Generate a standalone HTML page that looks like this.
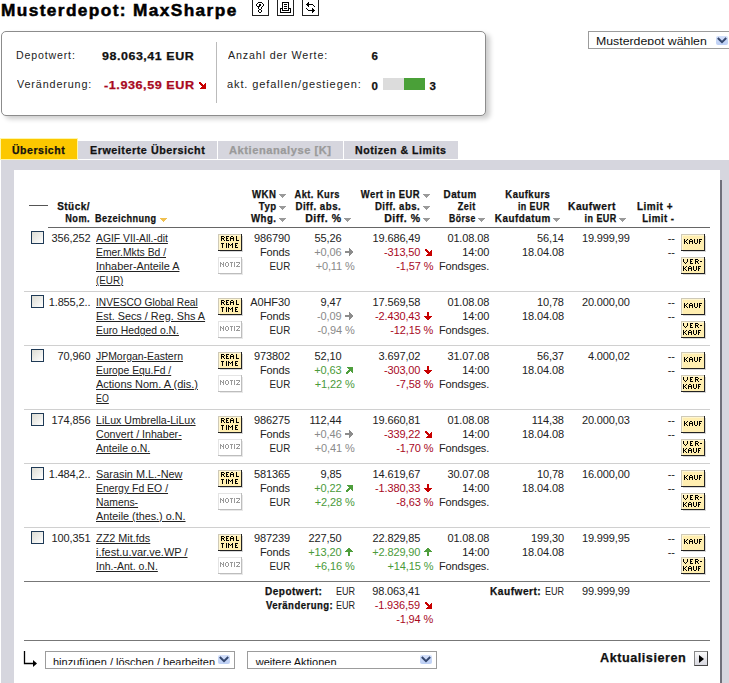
<!DOCTYPE html>
<html><head><meta charset="utf-8"><style>
html,body{margin:0;padding:0;background:#fff;}
body{width:729px;height:683px;position:relative;overflow:hidden;font-family:"Liberation Sans",sans-serif;}
.t{position:absolute;white-space:nowrap;}
.nm{text-decoration:underline;}
.b{-webkit-text-stroke:0.25px currentColor;}
</style></head><body>
<div class="t b" style="top:3px;font-size:16px;line-height:16px;font-weight:bold;letter-spacing:1.3px;transform:scaleX(1.0768);transform-origin:left center;left:1.482px;-webkit-text-stroke:0.5px #000;">Musterdepot: MaxSharpe</div>
<div style="position:absolute;left:252px;top:-1px;width:15px;height:15px;border:1px solid #222;background:#fff"></div>
<div style="position:absolute;left:277px;top:-1px;width:15px;height:15px;border:1px solid #222;background:#fff"></div>
<div style="position:absolute;left:302px;top:-1px;width:15px;height:15px;border:1px solid #222;background:#fff"></div>
<svg style="position:absolute;left:256px;top:2px" width="8" height="11" shape-rendering="crispEdges"><path d="M2 0h1v1h-1zM3 0h1v1h-1zM4 0h1v1h-1zM5 0h1v1h-1zM1 1h1v1h-1zM6 1h1v1h-1zM0 2h1v1h-1zM3 2h1v1h-1zM4 2h1v1h-1zM7 2h1v1h-1zM0 3h1v1h-1zM3 3h1v1h-1zM4 3h1v1h-1zM7 3h1v1h-1zM1 4h1v1h-1zM2 4h1v1h-1zM3 4h1v1h-1zM6 4h1v1h-1zM2 5h1v1h-1zM5 5h1v1h-1zM2 6h1v1h-1zM5 6h1v1h-1zM3 7h1v1h-1zM4 7h1v1h-1zM2 8h1v1h-1zM5 8h1v1h-1zM2 9h1v1h-1zM5 9h1v1h-1zM3 10h1v1h-1zM4 10h1v1h-1z" fill="#000"/></svg>
<svg style="position:absolute;left:280px;top:2px" width="11" height="11" shape-rendering="crispEdges"><path d="M2 0h1v1h-1zM3 0h1v1h-1zM4 0h1v1h-1zM5 0h1v1h-1zM6 0h1v1h-1zM7 0h1v1h-1zM8 0h1v1h-1zM2 1h1v1h-1zM8 1h1v1h-1zM2 2h1v1h-1zM4 2h1v1h-1zM5 2h1v1h-1zM6 2h1v1h-1zM8 2h1v1h-1zM2 3h1v1h-1zM8 3h1v1h-1zM2 4h1v1h-1zM4 4h1v1h-1zM5 4h1v1h-1zM6 4h1v1h-1zM8 4h1v1h-1zM2 5h1v1h-1zM8 5h1v1h-1zM0 6h1v1h-1zM1 6h1v1h-1zM2 6h1v1h-1zM4 6h1v1h-1zM5 6h1v1h-1zM6 6h1v1h-1zM8 6h1v1h-1zM9 6h1v1h-1zM10 6h1v1h-1zM0 7h1v1h-1zM2 7h1v1h-1zM8 7h1v1h-1zM10 7h1v1h-1zM0 8h1v1h-1zM2 8h1v1h-1zM3 8h1v1h-1zM4 8h1v1h-1zM5 8h1v1h-1zM6 8h1v1h-1zM7 8h1v1h-1zM8 8h1v1h-1zM10 8h1v1h-1zM0 9h1v1h-1zM10 9h1v1h-1zM0 10h1v1h-1zM1 10h1v1h-1zM2 10h1v1h-1zM3 10h1v1h-1zM4 10h1v1h-1zM5 10h1v1h-1zM6 10h1v1h-1zM7 10h1v1h-1zM8 10h1v1h-1zM9 10h1v1h-1zM10 10h1v1h-1z" fill="#000"/></svg>
<svg style="position:absolute;left:305px;top:2px" width="11" height="11" shape-rendering="crispEdges"><path d="M3 0h1v1h-1zM2 1h1v1h-1zM3 1h1v1h-1zM1 2h1v1h-1zM2 2h1v1h-1zM3 2h1v1h-1zM4 2h1v1h-1zM5 2h1v1h-1zM6 2h1v1h-1zM7 2h1v1h-1zM2 3h1v1h-1zM3 3h1v1h-1zM8 3h1v1h-1zM3 4h1v1h-1zM9 4h1v1h-1zM1 6h1v1h-1zM7 6h1v1h-1zM2 7h1v1h-1zM7 7h1v1h-1zM8 7h1v1h-1zM3 8h1v1h-1zM4 8h1v1h-1zM5 8h1v1h-1zM6 8h1v1h-1zM7 8h1v1h-1zM8 8h1v1h-1zM9 8h1v1h-1zM7 9h1v1h-1zM8 9h1v1h-1zM7 10h1v1h-1z" fill="#000"/></svg>
<div style="position:absolute;left:1px;top:31px;width:485px;height:85px;box-sizing:border-box;border:1px solid #8c8c8c;border-radius:5px;box-shadow:4px 3px 5px rgba(0,0,0,0.2);background:#fff"></div>
<div style="position:absolute;left:216px;top:42px;width:1px;height:61px;background:#bbb"></div>
<div class="t" style="top:51px;font-size:10px;line-height:10px;color:#222;letter-spacing:0.8px;transform:scaleX(1.0592);transform-origin:left center;left:16.273px;">Depotwert:</div>
<div class="t b" style="top:51px;font-size:11.5px;line-height:11.5px;font-weight:bold;color:#111;letter-spacing:0.5px;transform:scaleX(1.0833);transform-origin:left center;left:102.000px;">98.063,41 EUR</div>
<div class="t" style="top:80px;font-size:10px;line-height:10px;color:#222;letter-spacing:0.8px;transform:scaleX(1.0790);transform-origin:left center;left:17.158px;">Veränderung:</div>
<div class="t b" style="top:80px;font-size:11.5px;line-height:11.5px;font-weight:bold;color:#a8081e;letter-spacing:0.5px;transform:scaleX(1.0975);transform-origin:left center;left:103.723px;">-1.936,59 EUR</div>
<div class="t" style="top:51px;font-size:10px;line-height:10px;color:#222;letter-spacing:0.8px;transform:scaleX(1.0710);transform-origin:left center;left:227.598px;">Anzahl der Werte:</div>
<div class="t b" style="top:51px;font-size:11.5px;line-height:11.5px;font-weight:bold;color:#111;left:371.500px;">6</div>
<div class="t" style="top:80px;font-size:10px;line-height:10px;color:#222;letter-spacing:0.8px;transform:scaleX(1.1030);transform-origin:left center;left:227.361px;">akt. gefallen/gestiegen:</div>
<div class="t b" style="top:81px;font-size:11.5px;line-height:11.5px;font-weight:bold;color:#111;left:371.500px;">0</div>
<div style="position:absolute;left:383px;top:78px;width:20.6px;height:12px;background:#dcdcdc"></div>
<div style="position:absolute;left:403.6px;top:78px;width:21.4px;height:12px;background:#4aa038"></div>
<div class="t b" style="top:81px;font-size:11.5px;line-height:11.5px;font-weight:bold;color:#111;left:429.500px;">3</div>
<div style="position:absolute;left:588px;top:31px;width:160px;height:18px;box-sizing:border-box;border:1px solid #9c9c9c;background:#fff;overflow:hidden"></div>
<div class="t" style="top:37px;font-size:10px;line-height:10px;color:#111;transform:scaleX(1.2304);transform-origin:left center;left:595.763px;clip-path:inset(-3px -3px 2px -3px);">Musterdepot wählen</div>
<div style="position:absolute;left:716px;top:36px;width:12px;height:9px;background:linear-gradient(180deg,#d4e0fa,#bccff5);border-radius:2px"><svg width="12" height="9" viewBox="0 0 12 9" style="position:absolute;left:0;top:0"><path d="M1.8 2 L6 6.2 L10.2 2" stroke="#34476e" stroke-width="2" fill="none"/></svg></div>
<div style="position:absolute;left:0px;top:138px;width:78px;height:22px;background:#fff6a8"></div>
<div style="position:absolute;left:1px;top:139px;width:76px;height:20px;background:#fcc800"></div>
<div style="position:absolute;left:78px;top:141px;width:139px;height:18px;background:#d6d6de"></div>
<div style="position:absolute;left:218px;top:141px;width:125px;height:18px;background:#d6d6de"></div>
<div style="position:absolute;left:344px;top:141px;width:114px;height:18px;background:#d6d6de"></div>
<div class="t b" style="top:146px;font-size:10px;line-height:10px;font-weight:bold;color:#111;letter-spacing:0.5px;transform:scaleX(1.0511);transform-origin:left center;left:12.322px;">Übersicht</div>
<div class="t b" style="top:146px;font-size:10px;line-height:10px;font-weight:bold;color:#111;letter-spacing:0.5px;transform:scaleX(1.0751);transform-origin:left center;left:90.169px;">Erweiterte Übersicht</div>
<div class="t b" style="top:146px;font-size:10px;line-height:10px;font-weight:bold;color:#9a9a9a;letter-spacing:0.5px;transform:scaleX(1.1101);transform-origin:left center;left:229.287px;">Aktienanalyse [K]</div>
<div class="t b" style="top:146px;font-size:10px;line-height:10px;font-weight:bold;color:#111;letter-spacing:0.5px;transform:scaleX(1.0594);transform-origin:left center;left:355.315px;">Notizen &amp; Limits</div>
<div style="position:absolute;left:1px;top:160px;width:728px;height:523px;background:#d6d6de"></div>
<div style="position:absolute;left:14px;top:170px;width:706px;height:513px;background:#fff"></div>
<div style="position:absolute;left:720px;top:180px;width:2px;height:503px;background:#70707a"></div>
<div style="position:absolute;left:29px;top:205px;width:19px;height:1px;background:#555"></div>
<div class="t b" style="top:202px;font-size:10px;line-height:10px;font-weight:bold;color:#111;letter-spacing:0.5px;transform:scaleX(0.9959);transform-origin:right center;right:638.747px;text-align:right;">Stück/</div>
<div class="t b" style="top:214px;font-size:10px;line-height:10px;font-weight:bold;color:#111;letter-spacing:0.5px;transform:scaleX(0.9147);transform-origin:right center;right:638.846px;text-align:right;">Nom.</div>
<div class="t b" style="top:214px;font-size:10px;line-height:10px;font-weight:bold;color:#111;letter-spacing:0.5px;transform:scaleX(0.9097);transform-origin:left center;left:95.368px;">Bezeichnung</div>
<svg style="position:absolute;left:160px;top:218px" width="7" height="4" shape-rendering="crispEdges"><path d="M0 0h7v1h-1v1h-1v1h-1v1h-1v-1h-1v-1h-1v-1h-1z" fill="#f0c050"/></svg>
<div class="t b" style="top:190px;font-size:10px;line-height:10px;font-weight:bold;color:#111;letter-spacing:0.5px;transform:scaleX(0.9633);transform-origin:right center;right:452.738px;text-align:right;">WKN</div>
<div class="t b" style="top:202px;font-size:10px;line-height:10px;font-weight:bold;color:#111;letter-spacing:0.5px;transform:scaleX(0.9573);transform-origin:right center;right:452.690px;text-align:right;">Typ</div>
<div class="t b" style="top:214px;font-size:10px;line-height:10px;font-weight:bold;color:#111;letter-spacing:0.5px;transform:scaleX(0.9661);transform-origin:right center;right:452.708px;text-align:right;">Whg.</div>
<svg style="position:absolute;left:279px;top:194px" width="7" height="4" shape-rendering="crispEdges"><path d="M0 0h7v1h-1v1h-1v1h-1v1h-1v-1h-1v-1h-1v-1h-1z" fill="#9a9a9a"/></svg>
<svg style="position:absolute;left:279px;top:206px" width="7" height="4" shape-rendering="crispEdges"><path d="M0 0h7v1h-1v1h-1v1h-1v1h-1v-1h-1v-1h-1v-1h-1z" fill="#9a9a9a"/></svg>
<svg style="position:absolute;left:279px;top:218px" width="7" height="4" shape-rendering="crispEdges"><path d="M0 0h7v1h-1v1h-1v1h-1v1h-1v-1h-1v-1h-1v-1h-1z" fill="#9a9a9a"/></svg>
<div class="t b" style="top:190px;font-size:10px;line-height:10px;font-weight:bold;color:#111;letter-spacing:0.5px;transform:scaleX(0.9284);transform-origin:right center;right:388.746px;text-align:right;">Akt. Kurs</div>
<div class="t b" style="top:202px;font-size:10px;line-height:10px;font-weight:bold;color:#111;letter-spacing:0.5px;transform:scaleX(0.9706);transform-origin:right center;right:387.766px;text-align:right;">Diff. abs.</div>
<div class="t b" style="top:214px;font-size:10px;line-height:10px;font-weight:bold;color:#111;letter-spacing:0.5px;transform:scaleX(1.0525);transform-origin:right center;right:387.798px;text-align:right;">Diff. %</div>
<svg style="position:absolute;left:344px;top:218px" width="7" height="4" shape-rendering="crispEdges"><path d="M0 0h7v1h-1v1h-1v1h-1v1h-1v-1h-1v-1h-1v-1h-1z" fill="#9a9a9a"/></svg>
<div class="t b" style="top:190px;font-size:10px;line-height:10px;font-weight:bold;color:#111;letter-spacing:0.5px;transform:scaleX(0.9405);transform-origin:right center;right:309.000px;text-align:right;">Wert in EUR</div>
<div class="t b" style="top:202px;font-size:10px;line-height:10px;font-weight:bold;color:#111;letter-spacing:0.5px;transform:scaleX(0.9589);transform-origin:right center;right:309.059px;text-align:right;">Diff. abs.</div>
<div class="t b" style="top:214px;font-size:10px;line-height:10px;font-weight:bold;color:#111;letter-spacing:0.5px;transform:scaleX(1.0525);transform-origin:right center;right:307.985px;text-align:right;">Diff. %</div>
<svg style="position:absolute;left:423px;top:194px" width="7" height="4" shape-rendering="crispEdges"><path d="M0 0h7v1h-1v1h-1v1h-1v1h-1v-1h-1v-1h-1v-1h-1z" fill="#9a9a9a"/></svg>
<svg style="position:absolute;left:423px;top:206px" width="7" height="4" shape-rendering="crispEdges"><path d="M0 0h7v1h-1v1h-1v1h-1v1h-1v-1h-1v-1h-1v-1h-1z" fill="#9a9a9a"/></svg>
<svg style="position:absolute;left:423px;top:218px" width="7" height="4" shape-rendering="crispEdges"><path d="M0 0h7v1h-1v1h-1v1h-1v1h-1v-1h-1v-1h-1v-1h-1z" fill="#9a9a9a"/></svg>
<div class="t b" style="top:190px;font-size:10px;line-height:10px;font-weight:bold;color:#111;letter-spacing:0.5px;transform:scaleX(0.9833);transform-origin:right center;right:252.556px;text-align:right;">Datum</div>
<div class="t b" style="top:202px;font-size:10px;line-height:10px;font-weight:bold;color:#111;letter-spacing:0.5px;transform:scaleX(0.9073);transform-origin:right center;right:253.524px;text-align:right;">Zeit</div>
<div class="t b" style="top:214px;font-size:10px;line-height:10px;font-weight:bold;color:#111;letter-spacing:0.5px;transform:scaleX(0.8668);transform-origin:right center;right:253.468px;text-align:right;">Börse</div>
<svg style="position:absolute;left:478px;top:218px" width="7" height="4" shape-rendering="crispEdges"><path d="M0 0h7v1h-1v1h-1v1h-1v1h-1v-1h-1v-1h-1v-1h-1z" fill="#9a9a9a"/></svg>
<div class="t b" style="top:190px;font-size:10px;line-height:10px;font-weight:bold;color:#111;letter-spacing:0.5px;transform:scaleX(0.9502);transform-origin:right center;right:179.044px;text-align:right;">Kaufkurs</div>
<div class="t b" style="top:202px;font-size:10px;line-height:10px;font-weight:bold;color:#111;letter-spacing:0.5px;transform:scaleX(0.8916);transform-origin:right center;right:178.967px;text-align:right;">in EUR</div>
<div class="t b" style="top:214px;font-size:10px;line-height:10px;font-weight:bold;color:#111;letter-spacing:0.5px;transform:scaleX(0.9846);transform-origin:right center;right:178.001px;text-align:right;">Kaufdatum</div>
<svg style="position:absolute;left:553px;top:218px" width="7" height="4" shape-rendering="crispEdges"><path d="M0 0h7v1h-1v1h-1v1h-1v1h-1v-1h-1v-1h-1v-1h-1z" fill="#9a9a9a"/></svg>
<div class="t b" style="top:202px;font-size:10px;line-height:10px;font-weight:bold;color:#111;letter-spacing:0.5px;transform:scaleX(1.0201);transform-origin:right center;right:113.081px;text-align:right;">Kaufwert</div>
<div class="t b" style="top:214px;font-size:10px;line-height:10px;font-weight:bold;color:#111;letter-spacing:0.5px;transform:scaleX(0.9017);transform-origin:right center;right:111.944px;text-align:right;">in EUR</div>
<svg style="position:absolute;left:619px;top:218px" width="7" height="4" shape-rendering="crispEdges"><path d="M0 0h7v1h-1v1h-1v1h-1v1h-1v-1h-1v-1h-1v-1h-1z" fill="#9a9a9a"/></svg>
<div class="t b" style="top:202px;font-size:10px;line-height:10px;font-weight:bold;color:#111;letter-spacing:0.5px;transform:scaleX(1.0005);transform-origin:right center;right:56.181px;text-align:right;">Limit +</div>
<div class="t b" style="top:214px;font-size:10px;line-height:10px;font-weight:bold;color:#111;letter-spacing:0.5px;transform:scaleX(0.9640);transform-origin:right center;right:54.713px;text-align:right;">Limit -</div>
<div style="position:absolute;left:48px;top:227px;width:662px;height:1px;background:#666"></div>
<div style="position:absolute;left:31px;top:231px;width:13px;height:13px;box-sizing:border-box;border:1px solid #1f3a56;background:linear-gradient(135deg,#dcdcd4,#ffffff)"></div>
<div class="t" style="top:233px;font-size:11px;line-height:11px;color:#222;letter-spacing:-0.13px;right:638.630px;text-align:right;">356,252</div>
<div class="t" style="top:233px;font-size:11px;line-height:11px;color:#222;transform:scaleX(0.9406);transform-origin:left center;left:95.780px;text-decoration:underline;">AGIF VII-All.-dit</div>
<div class="t" style="top:247px;font-size:11px;line-height:11px;color:#222;transform:scaleX(0.9389);transform-origin:left center;left:95.780px;text-decoration:underline;">Emer.Mkts Bd /</div>
<div class="t" style="top:261px;font-size:11px;line-height:11px;color:#222;transform:scaleX(0.9886);transform-origin:left center;left:95.796px;text-decoration:underline;">Inhaber-Anteile A</div>
<div class="t" style="top:275px;font-size:11px;line-height:11px;color:#222;transform:scaleX(0.8924);transform-origin:left center;left:95.764px;text-decoration:underline;">(EUR)</div>
<svg style="position:absolute;left:218px;top:234px" width="26" height="19" shape-rendering="crispEdges"><rect x="0" y="0" width="24" height="17" fill="#ffeeb0"/><rect x="1" y="1" width="22" height="1" fill="#fff6d0"/><rect x="1" y="1" width="1" height="15" fill="#fff6d0"/><rect x="0" y="0" width="24" height="1" fill="#cfcab8"/><rect x="0" y="0" width="1" height="17" fill="#cfcab8"/><rect x="23" y="0" width="1" height="17" fill="#222"/><rect x="0" y="16" width="24" height="1" fill="#222"/><rect x="24" y="2" width="1" height="16" fill="#d8d8d8"/><rect x="2" y="17" width="23" height="1" fill="#d8d8d8"/><path d="M3 2h1v1h-1zM4 2h1v1h-1zM5 2h1v1h-1zM3 3h1v1h-1zM6 3h1v1h-1zM3 4h1v1h-1zM4 4h1v1h-1zM5 4h1v1h-1zM3 5h1v1h-1zM5 5h1v1h-1zM3 6h1v1h-1zM6 6h1v1h-1zM8 2h1v1h-1zM9 2h1v1h-1zM10 2h1v1h-1zM8 3h1v1h-1zM8 4h1v1h-1zM9 4h1v1h-1zM8 5h1v1h-1zM8 6h1v1h-1zM9 6h1v1h-1zM10 6h1v1h-1zM13 2h1v1h-1zM14 2h1v1h-1zM12 3h1v1h-1zM15 3h1v1h-1zM12 4h1v1h-1zM13 4h1v1h-1zM14 4h1v1h-1zM15 4h1v1h-1zM12 5h1v1h-1zM15 5h1v1h-1zM12 6h1v1h-1zM15 6h1v1h-1zM18 2h1v1h-1zM18 3h1v1h-1zM18 4h1v1h-1zM18 5h1v1h-1zM18 6h1v1h-1zM19 6h1v1h-1zM20 6h1v1h-1zM3 9h1v1h-1zM4 9h1v1h-1zM5 9h1v1h-1zM4 10h1v1h-1zM4 11h1v1h-1zM4 12h1v1h-1zM4 13h1v1h-1zM8 9h1v1h-1zM8 10h1v1h-1zM8 11h1v1h-1zM8 12h1v1h-1zM8 13h1v1h-1zM10 9h1v1h-1zM14 9h1v1h-1zM10 10h1v1h-1zM11 10h1v1h-1zM13 10h1v1h-1zM14 10h1v1h-1zM10 11h1v1h-1zM12 11h1v1h-1zM14 11h1v1h-1zM10 12h1v1h-1zM14 12h1v1h-1zM10 13h1v1h-1zM14 13h1v1h-1zM17 9h1v1h-1zM18 9h1v1h-1zM19 9h1v1h-1zM17 10h1v1h-1zM17 11h1v1h-1zM18 11h1v1h-1zM17 12h1v1h-1zM17 13h1v1h-1zM18 13h1v1h-1zM19 13h1v1h-1z" fill="#000"/></svg>
<svg style="position:absolute;left:218px;top:257px" width="26" height="19" shape-rendering="crispEdges"><rect x="0" y="0" width="24" height="17" fill="#fff"/><rect x="0" y="0" width="24" height="1" fill="#e4e4e4"/><rect x="0" y="0" width="1" height="17" fill="#e4e4e4"/><rect x="23" y="0" width="1" height="17" fill="#bdbdbd"/><rect x="0" y="16" width="24" height="1" fill="#bdbdbd"/><rect x="24" y="2" width="1" height="16" fill="#e8e8e8"/><rect x="2" y="17" width="23" height="1" fill="#e8e8e8"/><path d="M2 5h1v1h-1zM5 5h1v1h-1zM2 6h1v1h-1zM3 6h1v1h-1zM5 6h1v1h-1zM2 7h1v1h-1zM4 7h1v1h-1zM5 7h1v1h-1zM2 8h1v1h-1zM5 8h1v1h-1zM2 9h1v1h-1zM5 9h1v1h-1zM8 5h1v1h-1zM9 5h1v1h-1zM7 6h1v1h-1zM10 6h1v1h-1zM7 7h1v1h-1zM10 7h1v1h-1zM7 8h1v1h-1zM10 8h1v1h-1zM8 9h1v1h-1zM9 9h1v1h-1zM12 5h1v1h-1zM13 5h1v1h-1zM14 5h1v1h-1zM13 6h1v1h-1zM13 7h1v1h-1zM13 8h1v1h-1zM13 9h1v1h-1zM16 5h1v1h-1zM16 6h1v1h-1zM16 7h1v1h-1zM16 8h1v1h-1zM16 9h1v1h-1zM18 5h1v1h-1zM19 5h1v1h-1zM20 5h1v1h-1zM21 5h1v1h-1zM21 6h1v1h-1zM20 7h1v1h-1zM19 8h1v1h-1zM18 9h1v1h-1zM19 9h1v1h-1zM20 9h1v1h-1zM21 9h1v1h-1z" fill="#9a9a9a"/></svg>
<div class="t" style="top:233px;font-size:11px;line-height:11px;color:#222;letter-spacing:-0.13px;right:439.130px;text-align:right;">986790</div>
<div class="t" style="top:247px;font-size:11px;line-height:11px;color:#222;letter-spacing:-0.13px;right:439.130px;text-align:right;">Fonds</div>
<div class="t" style="top:261px;font-size:11px;line-height:11px;color:#222;transform:scaleX(0.8905);transform-origin:right center;right:439.000px;text-align:right;">EUR</div>
<div class="t" style="top:233px;font-size:11px;line-height:11px;color:#222;letter-spacing:-0.13px;right:387.530px;text-align:right;">55,26</div>
<div class="t" style="top:247px;font-size:11px;line-height:11px;color:#8a8a8a;letter-spacing:-0.13px;right:387.530px;text-align:right;">+0,06</div>
<svg style="position:absolute;left:345px;top:248px" width="8" height="8" shape-rendering="crispEdges"><path d="M4 0h1v1h-1zM4 1h1v1h-1zM5 1h1v1h-1zM4 2h1v1h-1zM5 2h1v1h-1zM6 2h1v1h-1zM0 3h1v1h-1zM1 3h1v1h-1zM2 3h1v1h-1zM3 3h1v1h-1zM4 3h1v1h-1zM5 3h1v1h-1zM6 3h1v1h-1zM7 3h1v1h-1zM0 4h1v1h-1zM1 4h1v1h-1zM2 4h1v1h-1zM3 4h1v1h-1zM4 4h1v1h-1zM5 4h1v1h-1zM6 4h1v1h-1zM7 4h1v1h-1zM4 5h1v1h-1zM5 5h1v1h-1zM6 5h1v1h-1zM4 6h1v1h-1zM5 6h1v1h-1zM4 7h1v1h-1z" fill="#8c8c8c"/></svg>
<div class="t" style="top:261px;font-size:11px;line-height:11px;color:#8a8a8a;letter-spacing:-0.13px;right:374.430px;text-align:right;">+0,11 %</div>
<div class="t" style="top:233px;font-size:11px;line-height:11px;color:#222;letter-spacing:-0.13px;right:308.730px;text-align:right;">19.686,49</div>
<div class="t" style="top:247px;font-size:11px;line-height:11px;color:#a8081e;letter-spacing:-0.13px;right:308.730px;text-align:right;">-313,50</div>
<svg style="position:absolute;left:425px;top:249px" width="7" height="7" shape-rendering="crispEdges"><path d="M0 0h1v1h-1zM1 0h1v1h-1zM0 1h1v1h-1zM1 1h1v1h-1zM2 1h1v1h-1zM6 1h1v1h-1zM1 2h1v1h-1zM2 2h1v1h-1zM3 2h1v1h-1zM5 2h1v1h-1zM6 2h1v1h-1zM2 3h1v1h-1zM3 3h1v1h-1zM4 3h1v1h-1zM5 3h1v1h-1zM6 3h1v1h-1zM3 4h1v1h-1zM4 4h1v1h-1zM5 4h1v1h-1zM6 4h1v1h-1zM2 5h1v1h-1zM3 5h1v1h-1zM4 5h1v1h-1zM5 5h1v1h-1zM6 5h1v1h-1zM1 6h1v1h-1zM2 6h1v1h-1zM3 6h1v1h-1zM4 6h1v1h-1zM5 6h1v1h-1zM6 6h1v1h-1z" fill="#c80000"/></svg>
<div class="t" style="top:261px;font-size:11px;line-height:11px;color:#a8081e;letter-spacing:-0.13px;right:295.730px;text-align:right;">-1,57 %</div>
<div class="t" style="top:233px;font-size:11px;line-height:11px;color:#222;letter-spacing:-0.13px;right:239.830px;text-align:right;">01.08.08</div>
<div class="t" style="top:247px;font-size:11px;line-height:11px;color:#222;letter-spacing:-0.13px;right:239.830px;text-align:right;">14:00</div>
<div class="t" style="top:261px;font-size:11px;line-height:11px;color:#222;letter-spacing:-0.13px;right:239.830px;text-align:right;">Fondsges.</div>
<div class="t" style="top:233px;font-size:11px;line-height:11px;color:#222;letter-spacing:-0.13px;right:165.130px;text-align:right;">56,14</div>
<div class="t" style="top:247px;font-size:11px;line-height:11px;color:#222;letter-spacing:-0.13px;right:165.130px;text-align:right;">18.04.08</div>
<div class="t" style="top:233px;font-size:11px;line-height:11px;color:#222;letter-spacing:-0.13px;right:99.330px;text-align:right;">19.999,99</div>
<div class="t" style="top:233px;font-size:11px;line-height:11px;color:#222;letter-spacing:-0.13px;right:54.130px;text-align:right;">--</div>
<div class="t" style="top:247px;font-size:11px;line-height:11px;color:#222;letter-spacing:-0.13px;right:54.130px;text-align:right;">--</div>
<svg style="position:absolute;left:681px;top:234px" width="26" height="19" shape-rendering="crispEdges"><rect x="0" y="0" width="24" height="17" fill="#ffeeb0"/><rect x="1" y="1" width="22" height="1" fill="#fff6d0"/><rect x="1" y="1" width="1" height="15" fill="#fff6d0"/><rect x="0" y="0" width="24" height="1" fill="#cfcab8"/><rect x="0" y="0" width="1" height="17" fill="#cfcab8"/><rect x="23" y="0" width="1" height="17" fill="#222"/><rect x="0" y="16" width="24" height="1" fill="#222"/><rect x="24" y="2" width="1" height="16" fill="#d8d8d8"/><rect x="2" y="17" width="23" height="1" fill="#d8d8d8"/><path d="M3 5h1v1h-1zM6 5h1v1h-1zM3 6h1v1h-1zM5 6h1v1h-1zM3 7h1v1h-1zM4 7h1v1h-1zM3 8h1v1h-1zM5 8h1v1h-1zM3 9h1v1h-1zM6 9h1v1h-1zM9 5h1v1h-1zM10 5h1v1h-1zM8 6h1v1h-1zM11 6h1v1h-1zM8 7h1v1h-1zM9 7h1v1h-1zM10 7h1v1h-1zM11 7h1v1h-1zM8 8h1v1h-1zM11 8h1v1h-1zM8 9h1v1h-1zM11 9h1v1h-1zM13 5h1v1h-1zM16 5h1v1h-1zM13 6h1v1h-1zM16 6h1v1h-1zM13 7h1v1h-1zM16 7h1v1h-1zM13 8h1v1h-1zM16 8h1v1h-1zM14 9h1v1h-1zM15 9h1v1h-1zM18 5h1v1h-1zM19 5h1v1h-1zM20 5h1v1h-1zM18 6h1v1h-1zM18 7h1v1h-1zM19 7h1v1h-1zM18 8h1v1h-1zM18 9h1v1h-1z" fill="#000"/></svg>
<svg style="position:absolute;left:681px;top:257px" width="26" height="19" shape-rendering="crispEdges"><rect x="0" y="0" width="24" height="17" fill="#ffeeb0"/><rect x="1" y="1" width="22" height="1" fill="#fff6d0"/><rect x="1" y="1" width="1" height="15" fill="#fff6d0"/><rect x="0" y="0" width="24" height="1" fill="#cfcab8"/><rect x="0" y="0" width="1" height="17" fill="#cfcab8"/><rect x="23" y="0" width="1" height="17" fill="#222"/><rect x="0" y="16" width="24" height="1" fill="#222"/><rect x="24" y="2" width="1" height="16" fill="#d8d8d8"/><rect x="2" y="17" width="23" height="1" fill="#d8d8d8"/><path d="M2 2h1v1h-1zM6 2h1v1h-1zM2 3h1v1h-1zM6 3h1v1h-1zM2 4h1v1h-1zM6 4h1v1h-1zM3 5h1v1h-1zM5 5h1v1h-1zM4 6h1v1h-1zM9 2h1v1h-1zM10 2h1v1h-1zM11 2h1v1h-1zM9 3h1v1h-1zM9 4h1v1h-1zM10 4h1v1h-1zM9 5h1v1h-1zM9 6h1v1h-1zM10 6h1v1h-1zM11 6h1v1h-1zM14 2h1v1h-1zM15 2h1v1h-1zM16 2h1v1h-1zM14 3h1v1h-1zM17 3h1v1h-1zM14 4h1v1h-1zM15 4h1v1h-1zM16 4h1v1h-1zM14 5h1v1h-1zM16 5h1v1h-1zM14 6h1v1h-1zM17 6h1v1h-1zM19 4h1v1h-1zM20 4h1v1h-1zM2 9h1v1h-1zM5 9h1v1h-1zM2 10h1v1h-1zM4 10h1v1h-1zM2 11h1v1h-1zM3 11h1v1h-1zM2 12h1v1h-1zM4 12h1v1h-1zM2 13h1v1h-1zM5 13h1v1h-1zM8 9h1v1h-1zM9 9h1v1h-1zM7 10h1v1h-1zM10 10h1v1h-1zM7 11h1v1h-1zM8 11h1v1h-1zM9 11h1v1h-1zM10 11h1v1h-1zM7 12h1v1h-1zM10 12h1v1h-1zM7 13h1v1h-1zM10 13h1v1h-1zM12 9h1v1h-1zM15 9h1v1h-1zM12 10h1v1h-1zM15 10h1v1h-1zM12 11h1v1h-1zM15 11h1v1h-1zM12 12h1v1h-1zM15 12h1v1h-1zM13 13h1v1h-1zM14 13h1v1h-1zM17 9h1v1h-1zM18 9h1v1h-1zM19 9h1v1h-1zM17 10h1v1h-1zM17 11h1v1h-1zM18 11h1v1h-1zM17 12h1v1h-1zM17 13h1v1h-1z" fill="#000"/></svg>
<div style="position:absolute;left:24px;top:291px;width:686px;height:1px;background:#d0d0d0"></div>
<div style="position:absolute;left:31px;top:295px;width:13px;height:13px;box-sizing:border-box;border:1px solid #1f3a56;background:linear-gradient(135deg,#dcdcd4,#ffffff)"></div>
<div class="t" style="top:297px;font-size:11px;line-height:11px;color:#222;letter-spacing:-0.13px;right:638.630px;text-align:right;">1.855,2..</div>
<div class="t" style="top:297px;font-size:11px;line-height:11px;color:#222;transform:scaleX(0.9245);transform-origin:left center;left:95.781px;text-decoration:underline;">INVESCO Global Real</div>
<div class="t" style="top:311px;font-size:11px;line-height:11px;color:#222;transform:scaleX(0.9857);transform-origin:left center;left:95.792px;text-decoration:underline;">Est. Secs / Reg. Shs A</div>
<div class="t" style="top:325px;font-size:11px;line-height:11px;color:#222;transform:scaleX(0.9417);transform-origin:left center;left:95.782px;text-decoration:underline;">Euro Hedged o.N.</div>
<svg style="position:absolute;left:218px;top:298px" width="26" height="19" shape-rendering="crispEdges"><rect x="0" y="0" width="24" height="17" fill="#ffeeb0"/><rect x="1" y="1" width="22" height="1" fill="#fff6d0"/><rect x="1" y="1" width="1" height="15" fill="#fff6d0"/><rect x="0" y="0" width="24" height="1" fill="#cfcab8"/><rect x="0" y="0" width="1" height="17" fill="#cfcab8"/><rect x="23" y="0" width="1" height="17" fill="#222"/><rect x="0" y="16" width="24" height="1" fill="#222"/><rect x="24" y="2" width="1" height="16" fill="#d8d8d8"/><rect x="2" y="17" width="23" height="1" fill="#d8d8d8"/><path d="M3 2h1v1h-1zM4 2h1v1h-1zM5 2h1v1h-1zM3 3h1v1h-1zM6 3h1v1h-1zM3 4h1v1h-1zM4 4h1v1h-1zM5 4h1v1h-1zM3 5h1v1h-1zM5 5h1v1h-1zM3 6h1v1h-1zM6 6h1v1h-1zM8 2h1v1h-1zM9 2h1v1h-1zM10 2h1v1h-1zM8 3h1v1h-1zM8 4h1v1h-1zM9 4h1v1h-1zM8 5h1v1h-1zM8 6h1v1h-1zM9 6h1v1h-1zM10 6h1v1h-1zM13 2h1v1h-1zM14 2h1v1h-1zM12 3h1v1h-1zM15 3h1v1h-1zM12 4h1v1h-1zM13 4h1v1h-1zM14 4h1v1h-1zM15 4h1v1h-1zM12 5h1v1h-1zM15 5h1v1h-1zM12 6h1v1h-1zM15 6h1v1h-1zM18 2h1v1h-1zM18 3h1v1h-1zM18 4h1v1h-1zM18 5h1v1h-1zM18 6h1v1h-1zM19 6h1v1h-1zM20 6h1v1h-1zM3 9h1v1h-1zM4 9h1v1h-1zM5 9h1v1h-1zM4 10h1v1h-1zM4 11h1v1h-1zM4 12h1v1h-1zM4 13h1v1h-1zM8 9h1v1h-1zM8 10h1v1h-1zM8 11h1v1h-1zM8 12h1v1h-1zM8 13h1v1h-1zM10 9h1v1h-1zM14 9h1v1h-1zM10 10h1v1h-1zM11 10h1v1h-1zM13 10h1v1h-1zM14 10h1v1h-1zM10 11h1v1h-1zM12 11h1v1h-1zM14 11h1v1h-1zM10 12h1v1h-1zM14 12h1v1h-1zM10 13h1v1h-1zM14 13h1v1h-1zM17 9h1v1h-1zM18 9h1v1h-1zM19 9h1v1h-1zM17 10h1v1h-1zM17 11h1v1h-1zM18 11h1v1h-1zM17 12h1v1h-1zM17 13h1v1h-1zM18 13h1v1h-1zM19 13h1v1h-1z" fill="#000"/></svg>
<svg style="position:absolute;left:218px;top:321px" width="26" height="19" shape-rendering="crispEdges"><rect x="0" y="0" width="24" height="17" fill="#fff"/><rect x="0" y="0" width="24" height="1" fill="#e4e4e4"/><rect x="0" y="0" width="1" height="17" fill="#e4e4e4"/><rect x="23" y="0" width="1" height="17" fill="#bdbdbd"/><rect x="0" y="16" width="24" height="1" fill="#bdbdbd"/><rect x="24" y="2" width="1" height="16" fill="#e8e8e8"/><rect x="2" y="17" width="23" height="1" fill="#e8e8e8"/><path d="M2 5h1v1h-1zM5 5h1v1h-1zM2 6h1v1h-1zM3 6h1v1h-1zM5 6h1v1h-1zM2 7h1v1h-1zM4 7h1v1h-1zM5 7h1v1h-1zM2 8h1v1h-1zM5 8h1v1h-1zM2 9h1v1h-1zM5 9h1v1h-1zM8 5h1v1h-1zM9 5h1v1h-1zM7 6h1v1h-1zM10 6h1v1h-1zM7 7h1v1h-1zM10 7h1v1h-1zM7 8h1v1h-1zM10 8h1v1h-1zM8 9h1v1h-1zM9 9h1v1h-1zM12 5h1v1h-1zM13 5h1v1h-1zM14 5h1v1h-1zM13 6h1v1h-1zM13 7h1v1h-1zM13 8h1v1h-1zM13 9h1v1h-1zM16 5h1v1h-1zM16 6h1v1h-1zM16 7h1v1h-1zM16 8h1v1h-1zM16 9h1v1h-1zM18 5h1v1h-1zM19 5h1v1h-1zM20 5h1v1h-1zM21 5h1v1h-1zM21 6h1v1h-1zM20 7h1v1h-1zM19 8h1v1h-1zM18 9h1v1h-1zM19 9h1v1h-1zM20 9h1v1h-1zM21 9h1v1h-1z" fill="#9a9a9a"/></svg>
<div class="t" style="top:297px;font-size:11px;line-height:11px;color:#222;letter-spacing:-0.13px;right:439.130px;text-align:right;">A0HF30</div>
<div class="t" style="top:311px;font-size:11px;line-height:11px;color:#222;letter-spacing:-0.13px;right:439.130px;text-align:right;">Fonds</div>
<div class="t" style="top:325px;font-size:11px;line-height:11px;color:#222;transform:scaleX(0.8905);transform-origin:right center;right:439.000px;text-align:right;">EUR</div>
<div class="t" style="top:297px;font-size:11px;line-height:11px;color:#222;letter-spacing:-0.13px;right:387.530px;text-align:right;">9,47</div>
<div class="t" style="top:311px;font-size:11px;line-height:11px;color:#8a8a8a;letter-spacing:-0.13px;right:387.530px;text-align:right;">-0,09</div>
<svg style="position:absolute;left:345px;top:312px" width="8" height="8" shape-rendering="crispEdges"><path d="M4 0h1v1h-1zM4 1h1v1h-1zM5 1h1v1h-1zM4 2h1v1h-1zM5 2h1v1h-1zM6 2h1v1h-1zM0 3h1v1h-1zM1 3h1v1h-1zM2 3h1v1h-1zM3 3h1v1h-1zM4 3h1v1h-1zM5 3h1v1h-1zM6 3h1v1h-1zM7 3h1v1h-1zM0 4h1v1h-1zM1 4h1v1h-1zM2 4h1v1h-1zM3 4h1v1h-1zM4 4h1v1h-1zM5 4h1v1h-1zM6 4h1v1h-1zM7 4h1v1h-1zM4 5h1v1h-1zM5 5h1v1h-1zM6 5h1v1h-1zM4 6h1v1h-1zM5 6h1v1h-1zM4 7h1v1h-1z" fill="#8c8c8c"/></svg>
<div class="t" style="top:325px;font-size:11px;line-height:11px;color:#8a8a8a;letter-spacing:-0.13px;right:374.430px;text-align:right;">-0,94 %</div>
<div class="t" style="top:297px;font-size:11px;line-height:11px;color:#222;letter-spacing:-0.13px;right:308.730px;text-align:right;">17.569,58</div>
<div class="t" style="top:311px;font-size:11px;line-height:11px;color:#a8081e;letter-spacing:-0.13px;right:308.730px;text-align:right;">-2.430,43</div>
<svg style="position:absolute;left:424px;top:312px" width="8" height="8" shape-rendering="crispEdges"><path d="M3 0h1v1h-1zM4 0h1v1h-1zM3 1h1v1h-1zM4 1h1v1h-1zM3 2h1v1h-1zM4 2h1v1h-1zM3 3h1v1h-1zM4 3h1v1h-1zM0 4h1v1h-1zM1 4h1v1h-1zM2 4h1v1h-1zM3 4h1v1h-1zM4 4h1v1h-1zM5 4h1v1h-1zM6 4h1v1h-1zM7 4h1v1h-1zM1 5h1v1h-1zM2 5h1v1h-1zM3 5h1v1h-1zM4 5h1v1h-1zM5 5h1v1h-1zM6 5h1v1h-1zM2 6h1v1h-1zM3 6h1v1h-1zM4 6h1v1h-1zM5 6h1v1h-1zM3 7h1v1h-1zM4 7h1v1h-1z" fill="#c80000"/></svg>
<div class="t" style="top:325px;font-size:11px;line-height:11px;color:#a8081e;letter-spacing:-0.13px;right:295.730px;text-align:right;">-12,15 %</div>
<div class="t" style="top:297px;font-size:11px;line-height:11px;color:#222;letter-spacing:-0.13px;right:239.830px;text-align:right;">01.08.08</div>
<div class="t" style="top:311px;font-size:11px;line-height:11px;color:#222;letter-spacing:-0.13px;right:239.830px;text-align:right;">14:00</div>
<div class="t" style="top:325px;font-size:11px;line-height:11px;color:#222;letter-spacing:-0.13px;right:239.830px;text-align:right;">Fondsges.</div>
<div class="t" style="top:297px;font-size:11px;line-height:11px;color:#222;letter-spacing:-0.13px;right:165.130px;text-align:right;">10,78</div>
<div class="t" style="top:311px;font-size:11px;line-height:11px;color:#222;letter-spacing:-0.13px;right:165.130px;text-align:right;">18.04.08</div>
<div class="t" style="top:297px;font-size:11px;line-height:11px;color:#222;letter-spacing:-0.13px;right:99.330px;text-align:right;">20.000,00</div>
<div class="t" style="top:297px;font-size:11px;line-height:11px;color:#222;letter-spacing:-0.13px;right:54.130px;text-align:right;">--</div>
<div class="t" style="top:311px;font-size:11px;line-height:11px;color:#222;letter-spacing:-0.13px;right:54.130px;text-align:right;">--</div>
<svg style="position:absolute;left:681px;top:298px" width="26" height="19" shape-rendering="crispEdges"><rect x="0" y="0" width="24" height="17" fill="#ffeeb0"/><rect x="1" y="1" width="22" height="1" fill="#fff6d0"/><rect x="1" y="1" width="1" height="15" fill="#fff6d0"/><rect x="0" y="0" width="24" height="1" fill="#cfcab8"/><rect x="0" y="0" width="1" height="17" fill="#cfcab8"/><rect x="23" y="0" width="1" height="17" fill="#222"/><rect x="0" y="16" width="24" height="1" fill="#222"/><rect x="24" y="2" width="1" height="16" fill="#d8d8d8"/><rect x="2" y="17" width="23" height="1" fill="#d8d8d8"/><path d="M3 5h1v1h-1zM6 5h1v1h-1zM3 6h1v1h-1zM5 6h1v1h-1zM3 7h1v1h-1zM4 7h1v1h-1zM3 8h1v1h-1zM5 8h1v1h-1zM3 9h1v1h-1zM6 9h1v1h-1zM9 5h1v1h-1zM10 5h1v1h-1zM8 6h1v1h-1zM11 6h1v1h-1zM8 7h1v1h-1zM9 7h1v1h-1zM10 7h1v1h-1zM11 7h1v1h-1zM8 8h1v1h-1zM11 8h1v1h-1zM8 9h1v1h-1zM11 9h1v1h-1zM13 5h1v1h-1zM16 5h1v1h-1zM13 6h1v1h-1zM16 6h1v1h-1zM13 7h1v1h-1zM16 7h1v1h-1zM13 8h1v1h-1zM16 8h1v1h-1zM14 9h1v1h-1zM15 9h1v1h-1zM18 5h1v1h-1zM19 5h1v1h-1zM20 5h1v1h-1zM18 6h1v1h-1zM18 7h1v1h-1zM19 7h1v1h-1zM18 8h1v1h-1zM18 9h1v1h-1z" fill="#000"/></svg>
<svg style="position:absolute;left:681px;top:321px" width="26" height="19" shape-rendering="crispEdges"><rect x="0" y="0" width="24" height="17" fill="#ffeeb0"/><rect x="1" y="1" width="22" height="1" fill="#fff6d0"/><rect x="1" y="1" width="1" height="15" fill="#fff6d0"/><rect x="0" y="0" width="24" height="1" fill="#cfcab8"/><rect x="0" y="0" width="1" height="17" fill="#cfcab8"/><rect x="23" y="0" width="1" height="17" fill="#222"/><rect x="0" y="16" width="24" height="1" fill="#222"/><rect x="24" y="2" width="1" height="16" fill="#d8d8d8"/><rect x="2" y="17" width="23" height="1" fill="#d8d8d8"/><path d="M2 2h1v1h-1zM6 2h1v1h-1zM2 3h1v1h-1zM6 3h1v1h-1zM2 4h1v1h-1zM6 4h1v1h-1zM3 5h1v1h-1zM5 5h1v1h-1zM4 6h1v1h-1zM9 2h1v1h-1zM10 2h1v1h-1zM11 2h1v1h-1zM9 3h1v1h-1zM9 4h1v1h-1zM10 4h1v1h-1zM9 5h1v1h-1zM9 6h1v1h-1zM10 6h1v1h-1zM11 6h1v1h-1zM14 2h1v1h-1zM15 2h1v1h-1zM16 2h1v1h-1zM14 3h1v1h-1zM17 3h1v1h-1zM14 4h1v1h-1zM15 4h1v1h-1zM16 4h1v1h-1zM14 5h1v1h-1zM16 5h1v1h-1zM14 6h1v1h-1zM17 6h1v1h-1zM19 4h1v1h-1zM20 4h1v1h-1zM2 9h1v1h-1zM5 9h1v1h-1zM2 10h1v1h-1zM4 10h1v1h-1zM2 11h1v1h-1zM3 11h1v1h-1zM2 12h1v1h-1zM4 12h1v1h-1zM2 13h1v1h-1zM5 13h1v1h-1zM8 9h1v1h-1zM9 9h1v1h-1zM7 10h1v1h-1zM10 10h1v1h-1zM7 11h1v1h-1zM8 11h1v1h-1zM9 11h1v1h-1zM10 11h1v1h-1zM7 12h1v1h-1zM10 12h1v1h-1zM7 13h1v1h-1zM10 13h1v1h-1zM12 9h1v1h-1zM15 9h1v1h-1zM12 10h1v1h-1zM15 10h1v1h-1zM12 11h1v1h-1zM15 11h1v1h-1zM12 12h1v1h-1zM15 12h1v1h-1zM13 13h1v1h-1zM14 13h1v1h-1zM17 9h1v1h-1zM18 9h1v1h-1zM19 9h1v1h-1zM17 10h1v1h-1zM17 11h1v1h-1zM18 11h1v1h-1zM17 12h1v1h-1zM17 13h1v1h-1z" fill="#000"/></svg>
<div style="position:absolute;left:24px;top:345px;width:686px;height:1px;background:#d0d0d0"></div>
<div style="position:absolute;left:31px;top:349px;width:13px;height:13px;box-sizing:border-box;border:1px solid #1f3a56;background:linear-gradient(135deg,#dcdcd4,#ffffff)"></div>
<div class="t" style="top:351px;font-size:11px;line-height:11px;color:#222;letter-spacing:-0.13px;right:638.630px;text-align:right;">70,960</div>
<div class="t" style="top:351px;font-size:11px;line-height:11px;color:#222;transform:scaleX(0.9481);transform-origin:left center;left:95.808px;text-decoration:underline;">JPMorgan-Eastern</div>
<div class="t" style="top:365px;font-size:11px;line-height:11px;color:#222;transform:scaleX(0.9386);transform-origin:left center;left:95.784px;text-decoration:underline;">Europe Equ.Fd /</div>
<div class="t" style="top:379px;font-size:11px;line-height:11px;color:#222;transform:scaleX(0.9983);transform-origin:left center;left:95.803px;text-decoration:underline;">Actions Nom. A (dis.)</div>
<div class="t" style="top:393px;font-size:11px;line-height:11px;color:#222;transform:scaleX(0.8042);transform-origin:left center;left:95.794px;text-decoration:underline;">EO</div>
<svg style="position:absolute;left:218px;top:352px" width="26" height="19" shape-rendering="crispEdges"><rect x="0" y="0" width="24" height="17" fill="#ffeeb0"/><rect x="1" y="1" width="22" height="1" fill="#fff6d0"/><rect x="1" y="1" width="1" height="15" fill="#fff6d0"/><rect x="0" y="0" width="24" height="1" fill="#cfcab8"/><rect x="0" y="0" width="1" height="17" fill="#cfcab8"/><rect x="23" y="0" width="1" height="17" fill="#222"/><rect x="0" y="16" width="24" height="1" fill="#222"/><rect x="24" y="2" width="1" height="16" fill="#d8d8d8"/><rect x="2" y="17" width="23" height="1" fill="#d8d8d8"/><path d="M3 2h1v1h-1zM4 2h1v1h-1zM5 2h1v1h-1zM3 3h1v1h-1zM6 3h1v1h-1zM3 4h1v1h-1zM4 4h1v1h-1zM5 4h1v1h-1zM3 5h1v1h-1zM5 5h1v1h-1zM3 6h1v1h-1zM6 6h1v1h-1zM8 2h1v1h-1zM9 2h1v1h-1zM10 2h1v1h-1zM8 3h1v1h-1zM8 4h1v1h-1zM9 4h1v1h-1zM8 5h1v1h-1zM8 6h1v1h-1zM9 6h1v1h-1zM10 6h1v1h-1zM13 2h1v1h-1zM14 2h1v1h-1zM12 3h1v1h-1zM15 3h1v1h-1zM12 4h1v1h-1zM13 4h1v1h-1zM14 4h1v1h-1zM15 4h1v1h-1zM12 5h1v1h-1zM15 5h1v1h-1zM12 6h1v1h-1zM15 6h1v1h-1zM18 2h1v1h-1zM18 3h1v1h-1zM18 4h1v1h-1zM18 5h1v1h-1zM18 6h1v1h-1zM19 6h1v1h-1zM20 6h1v1h-1zM3 9h1v1h-1zM4 9h1v1h-1zM5 9h1v1h-1zM4 10h1v1h-1zM4 11h1v1h-1zM4 12h1v1h-1zM4 13h1v1h-1zM8 9h1v1h-1zM8 10h1v1h-1zM8 11h1v1h-1zM8 12h1v1h-1zM8 13h1v1h-1zM10 9h1v1h-1zM14 9h1v1h-1zM10 10h1v1h-1zM11 10h1v1h-1zM13 10h1v1h-1zM14 10h1v1h-1zM10 11h1v1h-1zM12 11h1v1h-1zM14 11h1v1h-1zM10 12h1v1h-1zM14 12h1v1h-1zM10 13h1v1h-1zM14 13h1v1h-1zM17 9h1v1h-1zM18 9h1v1h-1zM19 9h1v1h-1zM17 10h1v1h-1zM17 11h1v1h-1zM18 11h1v1h-1zM17 12h1v1h-1zM17 13h1v1h-1zM18 13h1v1h-1zM19 13h1v1h-1z" fill="#000"/></svg>
<svg style="position:absolute;left:218px;top:375px" width="26" height="19" shape-rendering="crispEdges"><rect x="0" y="0" width="24" height="17" fill="#fff"/><rect x="0" y="0" width="24" height="1" fill="#e4e4e4"/><rect x="0" y="0" width="1" height="17" fill="#e4e4e4"/><rect x="23" y="0" width="1" height="17" fill="#bdbdbd"/><rect x="0" y="16" width="24" height="1" fill="#bdbdbd"/><rect x="24" y="2" width="1" height="16" fill="#e8e8e8"/><rect x="2" y="17" width="23" height="1" fill="#e8e8e8"/><path d="M2 5h1v1h-1zM5 5h1v1h-1zM2 6h1v1h-1zM3 6h1v1h-1zM5 6h1v1h-1zM2 7h1v1h-1zM4 7h1v1h-1zM5 7h1v1h-1zM2 8h1v1h-1zM5 8h1v1h-1zM2 9h1v1h-1zM5 9h1v1h-1zM8 5h1v1h-1zM9 5h1v1h-1zM7 6h1v1h-1zM10 6h1v1h-1zM7 7h1v1h-1zM10 7h1v1h-1zM7 8h1v1h-1zM10 8h1v1h-1zM8 9h1v1h-1zM9 9h1v1h-1zM12 5h1v1h-1zM13 5h1v1h-1zM14 5h1v1h-1zM13 6h1v1h-1zM13 7h1v1h-1zM13 8h1v1h-1zM13 9h1v1h-1zM16 5h1v1h-1zM16 6h1v1h-1zM16 7h1v1h-1zM16 8h1v1h-1zM16 9h1v1h-1zM18 5h1v1h-1zM19 5h1v1h-1zM20 5h1v1h-1zM21 5h1v1h-1zM21 6h1v1h-1zM20 7h1v1h-1zM19 8h1v1h-1zM18 9h1v1h-1zM19 9h1v1h-1zM20 9h1v1h-1zM21 9h1v1h-1z" fill="#9a9a9a"/></svg>
<div class="t" style="top:351px;font-size:11px;line-height:11px;color:#222;letter-spacing:-0.13px;right:439.130px;text-align:right;">973802</div>
<div class="t" style="top:365px;font-size:11px;line-height:11px;color:#222;letter-spacing:-0.13px;right:439.130px;text-align:right;">Fonds</div>
<div class="t" style="top:379px;font-size:11px;line-height:11px;color:#222;transform:scaleX(0.8905);transform-origin:right center;right:439.000px;text-align:right;">EUR</div>
<div class="t" style="top:351px;font-size:11px;line-height:11px;color:#222;letter-spacing:-0.13px;right:387.530px;text-align:right;">52,10</div>
<div class="t" style="top:365px;font-size:11px;line-height:11px;color:#4a9a3a;letter-spacing:-0.13px;right:387.530px;text-align:right;">+0,63</div>
<svg style="position:absolute;left:346px;top:367px" width="7" height="7" shape-rendering="crispEdges"><path d="M1 0h1v1h-1zM2 0h1v1h-1zM3 0h1v1h-1zM4 0h1v1h-1zM5 0h1v1h-1zM6 0h1v1h-1zM2 1h1v1h-1zM3 1h1v1h-1zM4 1h1v1h-1zM5 1h1v1h-1zM6 1h1v1h-1zM3 2h1v1h-1zM4 2h1v1h-1zM5 2h1v1h-1zM6 2h1v1h-1zM2 3h1v1h-1zM3 3h1v1h-1zM4 3h1v1h-1zM5 3h1v1h-1zM6 3h1v1h-1zM1 4h1v1h-1zM2 4h1v1h-1zM3 4h1v1h-1zM5 4h1v1h-1zM6 4h1v1h-1zM0 5h1v1h-1zM1 5h1v1h-1zM2 5h1v1h-1zM6 5h1v1h-1zM0 6h1v1h-1zM1 6h1v1h-1z" fill="#4e9e3c"/></svg>
<div class="t" style="top:379px;font-size:11px;line-height:11px;color:#4a9a3a;letter-spacing:-0.13px;right:374.430px;text-align:right;">+1,22 %</div>
<div class="t" style="top:351px;font-size:11px;line-height:11px;color:#222;letter-spacing:-0.13px;right:308.730px;text-align:right;">3.697,02</div>
<div class="t" style="top:365px;font-size:11px;line-height:11px;color:#a8081e;letter-spacing:-0.13px;right:308.730px;text-align:right;">-303,00</div>
<svg style="position:absolute;left:424px;top:366px" width="8" height="8" shape-rendering="crispEdges"><path d="M3 0h1v1h-1zM4 0h1v1h-1zM3 1h1v1h-1zM4 1h1v1h-1zM3 2h1v1h-1zM4 2h1v1h-1zM3 3h1v1h-1zM4 3h1v1h-1zM0 4h1v1h-1zM1 4h1v1h-1zM2 4h1v1h-1zM3 4h1v1h-1zM4 4h1v1h-1zM5 4h1v1h-1zM6 4h1v1h-1zM7 4h1v1h-1zM1 5h1v1h-1zM2 5h1v1h-1zM3 5h1v1h-1zM4 5h1v1h-1zM5 5h1v1h-1zM6 5h1v1h-1zM2 6h1v1h-1zM3 6h1v1h-1zM4 6h1v1h-1zM5 6h1v1h-1zM3 7h1v1h-1zM4 7h1v1h-1z" fill="#c80000"/></svg>
<div class="t" style="top:379px;font-size:11px;line-height:11px;color:#a8081e;letter-spacing:-0.13px;right:295.730px;text-align:right;">-7,58 %</div>
<div class="t" style="top:351px;font-size:11px;line-height:11px;color:#222;letter-spacing:-0.13px;right:239.830px;text-align:right;">31.07.08</div>
<div class="t" style="top:365px;font-size:11px;line-height:11px;color:#222;letter-spacing:-0.13px;right:239.830px;text-align:right;">14:00</div>
<div class="t" style="top:379px;font-size:11px;line-height:11px;color:#222;letter-spacing:-0.13px;right:239.830px;text-align:right;">Fondsges.</div>
<div class="t" style="top:351px;font-size:11px;line-height:11px;color:#222;letter-spacing:-0.13px;right:165.130px;text-align:right;">56,37</div>
<div class="t" style="top:365px;font-size:11px;line-height:11px;color:#222;letter-spacing:-0.13px;right:165.130px;text-align:right;">18.04.08</div>
<div class="t" style="top:351px;font-size:11px;line-height:11px;color:#222;letter-spacing:-0.13px;right:99.330px;text-align:right;">4.000,02</div>
<div class="t" style="top:351px;font-size:11px;line-height:11px;color:#222;letter-spacing:-0.13px;right:54.130px;text-align:right;">--</div>
<div class="t" style="top:365px;font-size:11px;line-height:11px;color:#222;letter-spacing:-0.13px;right:54.130px;text-align:right;">--</div>
<svg style="position:absolute;left:681px;top:352px" width="26" height="19" shape-rendering="crispEdges"><rect x="0" y="0" width="24" height="17" fill="#ffeeb0"/><rect x="1" y="1" width="22" height="1" fill="#fff6d0"/><rect x="1" y="1" width="1" height="15" fill="#fff6d0"/><rect x="0" y="0" width="24" height="1" fill="#cfcab8"/><rect x="0" y="0" width="1" height="17" fill="#cfcab8"/><rect x="23" y="0" width="1" height="17" fill="#222"/><rect x="0" y="16" width="24" height="1" fill="#222"/><rect x="24" y="2" width="1" height="16" fill="#d8d8d8"/><rect x="2" y="17" width="23" height="1" fill="#d8d8d8"/><path d="M3 5h1v1h-1zM6 5h1v1h-1zM3 6h1v1h-1zM5 6h1v1h-1zM3 7h1v1h-1zM4 7h1v1h-1zM3 8h1v1h-1zM5 8h1v1h-1zM3 9h1v1h-1zM6 9h1v1h-1zM9 5h1v1h-1zM10 5h1v1h-1zM8 6h1v1h-1zM11 6h1v1h-1zM8 7h1v1h-1zM9 7h1v1h-1zM10 7h1v1h-1zM11 7h1v1h-1zM8 8h1v1h-1zM11 8h1v1h-1zM8 9h1v1h-1zM11 9h1v1h-1zM13 5h1v1h-1zM16 5h1v1h-1zM13 6h1v1h-1zM16 6h1v1h-1zM13 7h1v1h-1zM16 7h1v1h-1zM13 8h1v1h-1zM16 8h1v1h-1zM14 9h1v1h-1zM15 9h1v1h-1zM18 5h1v1h-1zM19 5h1v1h-1zM20 5h1v1h-1zM18 6h1v1h-1zM18 7h1v1h-1zM19 7h1v1h-1zM18 8h1v1h-1zM18 9h1v1h-1z" fill="#000"/></svg>
<svg style="position:absolute;left:681px;top:375px" width="26" height="19" shape-rendering="crispEdges"><rect x="0" y="0" width="24" height="17" fill="#ffeeb0"/><rect x="1" y="1" width="22" height="1" fill="#fff6d0"/><rect x="1" y="1" width="1" height="15" fill="#fff6d0"/><rect x="0" y="0" width="24" height="1" fill="#cfcab8"/><rect x="0" y="0" width="1" height="17" fill="#cfcab8"/><rect x="23" y="0" width="1" height="17" fill="#222"/><rect x="0" y="16" width="24" height="1" fill="#222"/><rect x="24" y="2" width="1" height="16" fill="#d8d8d8"/><rect x="2" y="17" width="23" height="1" fill="#d8d8d8"/><path d="M2 2h1v1h-1zM6 2h1v1h-1zM2 3h1v1h-1zM6 3h1v1h-1zM2 4h1v1h-1zM6 4h1v1h-1zM3 5h1v1h-1zM5 5h1v1h-1zM4 6h1v1h-1zM9 2h1v1h-1zM10 2h1v1h-1zM11 2h1v1h-1zM9 3h1v1h-1zM9 4h1v1h-1zM10 4h1v1h-1zM9 5h1v1h-1zM9 6h1v1h-1zM10 6h1v1h-1zM11 6h1v1h-1zM14 2h1v1h-1zM15 2h1v1h-1zM16 2h1v1h-1zM14 3h1v1h-1zM17 3h1v1h-1zM14 4h1v1h-1zM15 4h1v1h-1zM16 4h1v1h-1zM14 5h1v1h-1zM16 5h1v1h-1zM14 6h1v1h-1zM17 6h1v1h-1zM19 4h1v1h-1zM20 4h1v1h-1zM2 9h1v1h-1zM5 9h1v1h-1zM2 10h1v1h-1zM4 10h1v1h-1zM2 11h1v1h-1zM3 11h1v1h-1zM2 12h1v1h-1zM4 12h1v1h-1zM2 13h1v1h-1zM5 13h1v1h-1zM8 9h1v1h-1zM9 9h1v1h-1zM7 10h1v1h-1zM10 10h1v1h-1zM7 11h1v1h-1zM8 11h1v1h-1zM9 11h1v1h-1zM10 11h1v1h-1zM7 12h1v1h-1zM10 12h1v1h-1zM7 13h1v1h-1zM10 13h1v1h-1zM12 9h1v1h-1zM15 9h1v1h-1zM12 10h1v1h-1zM15 10h1v1h-1zM12 11h1v1h-1zM15 11h1v1h-1zM12 12h1v1h-1zM15 12h1v1h-1zM13 13h1v1h-1zM14 13h1v1h-1zM17 9h1v1h-1zM18 9h1v1h-1zM19 9h1v1h-1zM17 10h1v1h-1zM17 11h1v1h-1zM18 11h1v1h-1zM17 12h1v1h-1zM17 13h1v1h-1z" fill="#000"/></svg>
<div style="position:absolute;left:24px;top:409px;width:686px;height:1px;background:#d0d0d0"></div>
<div style="position:absolute;left:31px;top:413px;width:13px;height:13px;box-sizing:border-box;border:1px solid #1f3a56;background:linear-gradient(135deg,#dcdcd4,#ffffff)"></div>
<div class="t" style="top:415px;font-size:11px;line-height:11px;color:#222;letter-spacing:-0.13px;right:638.630px;text-align:right;">174,856</div>
<div class="t" style="top:415px;font-size:11px;line-height:11px;color:#222;transform:scaleX(0.9636);transform-origin:left center;left:95.784px;text-decoration:underline;">LiLux Umbrella-LiLux</div>
<div class="t" style="top:429px;font-size:11px;line-height:11px;color:#222;transform:scaleX(0.9666);transform-origin:left center;left:95.799px;text-decoration:underline;">Convert / Inhaber-</div>
<div class="t" style="top:443px;font-size:11px;line-height:11px;color:#222;transform:scaleX(0.9515);transform-origin:left center;left:95.761px;text-decoration:underline;">Anteile o.N.</div>
<svg style="position:absolute;left:218px;top:416px" width="26" height="19" shape-rendering="crispEdges"><rect x="0" y="0" width="24" height="17" fill="#ffeeb0"/><rect x="1" y="1" width="22" height="1" fill="#fff6d0"/><rect x="1" y="1" width="1" height="15" fill="#fff6d0"/><rect x="0" y="0" width="24" height="1" fill="#cfcab8"/><rect x="0" y="0" width="1" height="17" fill="#cfcab8"/><rect x="23" y="0" width="1" height="17" fill="#222"/><rect x="0" y="16" width="24" height="1" fill="#222"/><rect x="24" y="2" width="1" height="16" fill="#d8d8d8"/><rect x="2" y="17" width="23" height="1" fill="#d8d8d8"/><path d="M3 2h1v1h-1zM4 2h1v1h-1zM5 2h1v1h-1zM3 3h1v1h-1zM6 3h1v1h-1zM3 4h1v1h-1zM4 4h1v1h-1zM5 4h1v1h-1zM3 5h1v1h-1zM5 5h1v1h-1zM3 6h1v1h-1zM6 6h1v1h-1zM8 2h1v1h-1zM9 2h1v1h-1zM10 2h1v1h-1zM8 3h1v1h-1zM8 4h1v1h-1zM9 4h1v1h-1zM8 5h1v1h-1zM8 6h1v1h-1zM9 6h1v1h-1zM10 6h1v1h-1zM13 2h1v1h-1zM14 2h1v1h-1zM12 3h1v1h-1zM15 3h1v1h-1zM12 4h1v1h-1zM13 4h1v1h-1zM14 4h1v1h-1zM15 4h1v1h-1zM12 5h1v1h-1zM15 5h1v1h-1zM12 6h1v1h-1zM15 6h1v1h-1zM18 2h1v1h-1zM18 3h1v1h-1zM18 4h1v1h-1zM18 5h1v1h-1zM18 6h1v1h-1zM19 6h1v1h-1zM20 6h1v1h-1zM3 9h1v1h-1zM4 9h1v1h-1zM5 9h1v1h-1zM4 10h1v1h-1zM4 11h1v1h-1zM4 12h1v1h-1zM4 13h1v1h-1zM8 9h1v1h-1zM8 10h1v1h-1zM8 11h1v1h-1zM8 12h1v1h-1zM8 13h1v1h-1zM10 9h1v1h-1zM14 9h1v1h-1zM10 10h1v1h-1zM11 10h1v1h-1zM13 10h1v1h-1zM14 10h1v1h-1zM10 11h1v1h-1zM12 11h1v1h-1zM14 11h1v1h-1zM10 12h1v1h-1zM14 12h1v1h-1zM10 13h1v1h-1zM14 13h1v1h-1zM17 9h1v1h-1zM18 9h1v1h-1zM19 9h1v1h-1zM17 10h1v1h-1zM17 11h1v1h-1zM18 11h1v1h-1zM17 12h1v1h-1zM17 13h1v1h-1zM18 13h1v1h-1zM19 13h1v1h-1z" fill="#000"/></svg>
<svg style="position:absolute;left:218px;top:439px" width="26" height="19" shape-rendering="crispEdges"><rect x="0" y="0" width="24" height="17" fill="#fff"/><rect x="0" y="0" width="24" height="1" fill="#e4e4e4"/><rect x="0" y="0" width="1" height="17" fill="#e4e4e4"/><rect x="23" y="0" width="1" height="17" fill="#bdbdbd"/><rect x="0" y="16" width="24" height="1" fill="#bdbdbd"/><rect x="24" y="2" width="1" height="16" fill="#e8e8e8"/><rect x="2" y="17" width="23" height="1" fill="#e8e8e8"/><path d="M2 5h1v1h-1zM5 5h1v1h-1zM2 6h1v1h-1zM3 6h1v1h-1zM5 6h1v1h-1zM2 7h1v1h-1zM4 7h1v1h-1zM5 7h1v1h-1zM2 8h1v1h-1zM5 8h1v1h-1zM2 9h1v1h-1zM5 9h1v1h-1zM8 5h1v1h-1zM9 5h1v1h-1zM7 6h1v1h-1zM10 6h1v1h-1zM7 7h1v1h-1zM10 7h1v1h-1zM7 8h1v1h-1zM10 8h1v1h-1zM8 9h1v1h-1zM9 9h1v1h-1zM12 5h1v1h-1zM13 5h1v1h-1zM14 5h1v1h-1zM13 6h1v1h-1zM13 7h1v1h-1zM13 8h1v1h-1zM13 9h1v1h-1zM16 5h1v1h-1zM16 6h1v1h-1zM16 7h1v1h-1zM16 8h1v1h-1zM16 9h1v1h-1zM18 5h1v1h-1zM19 5h1v1h-1zM20 5h1v1h-1zM21 5h1v1h-1zM21 6h1v1h-1zM20 7h1v1h-1zM19 8h1v1h-1zM18 9h1v1h-1zM19 9h1v1h-1zM20 9h1v1h-1zM21 9h1v1h-1z" fill="#9a9a9a"/></svg>
<div class="t" style="top:415px;font-size:11px;line-height:11px;color:#222;letter-spacing:-0.13px;right:439.130px;text-align:right;">986275</div>
<div class="t" style="top:429px;font-size:11px;line-height:11px;color:#222;letter-spacing:-0.13px;right:439.130px;text-align:right;">Fonds</div>
<div class="t" style="top:443px;font-size:11px;line-height:11px;color:#222;transform:scaleX(0.8905);transform-origin:right center;right:439.000px;text-align:right;">EUR</div>
<div class="t" style="top:415px;font-size:11px;line-height:11px;color:#222;letter-spacing:-0.13px;right:387.530px;text-align:right;">112,44</div>
<div class="t" style="top:429px;font-size:11px;line-height:11px;color:#8a8a8a;letter-spacing:-0.13px;right:387.530px;text-align:right;">+0,46</div>
<svg style="position:absolute;left:345px;top:430px" width="8" height="8" shape-rendering="crispEdges"><path d="M4 0h1v1h-1zM4 1h1v1h-1zM5 1h1v1h-1zM4 2h1v1h-1zM5 2h1v1h-1zM6 2h1v1h-1zM0 3h1v1h-1zM1 3h1v1h-1zM2 3h1v1h-1zM3 3h1v1h-1zM4 3h1v1h-1zM5 3h1v1h-1zM6 3h1v1h-1zM7 3h1v1h-1zM0 4h1v1h-1zM1 4h1v1h-1zM2 4h1v1h-1zM3 4h1v1h-1zM4 4h1v1h-1zM5 4h1v1h-1zM6 4h1v1h-1zM7 4h1v1h-1zM4 5h1v1h-1zM5 5h1v1h-1zM6 5h1v1h-1zM4 6h1v1h-1zM5 6h1v1h-1zM4 7h1v1h-1z" fill="#8c8c8c"/></svg>
<div class="t" style="top:443px;font-size:11px;line-height:11px;color:#8a8a8a;letter-spacing:-0.13px;right:374.430px;text-align:right;">+0,41 %</div>
<div class="t" style="top:415px;font-size:11px;line-height:11px;color:#222;letter-spacing:-0.13px;right:308.730px;text-align:right;">19.660,81</div>
<div class="t" style="top:429px;font-size:11px;line-height:11px;color:#a8081e;letter-spacing:-0.13px;right:308.730px;text-align:right;">-339,22</div>
<svg style="position:absolute;left:425px;top:431px" width="7" height="7" shape-rendering="crispEdges"><path d="M0 0h1v1h-1zM1 0h1v1h-1zM0 1h1v1h-1zM1 1h1v1h-1zM2 1h1v1h-1zM6 1h1v1h-1zM1 2h1v1h-1zM2 2h1v1h-1zM3 2h1v1h-1zM5 2h1v1h-1zM6 2h1v1h-1zM2 3h1v1h-1zM3 3h1v1h-1zM4 3h1v1h-1zM5 3h1v1h-1zM6 3h1v1h-1zM3 4h1v1h-1zM4 4h1v1h-1zM5 4h1v1h-1zM6 4h1v1h-1zM2 5h1v1h-1zM3 5h1v1h-1zM4 5h1v1h-1zM5 5h1v1h-1zM6 5h1v1h-1zM1 6h1v1h-1zM2 6h1v1h-1zM3 6h1v1h-1zM4 6h1v1h-1zM5 6h1v1h-1zM6 6h1v1h-1z" fill="#c80000"/></svg>
<div class="t" style="top:443px;font-size:11px;line-height:11px;color:#a8081e;letter-spacing:-0.13px;right:295.730px;text-align:right;">-1,70 %</div>
<div class="t" style="top:415px;font-size:11px;line-height:11px;color:#222;letter-spacing:-0.13px;right:239.830px;text-align:right;">01.08.08</div>
<div class="t" style="top:429px;font-size:11px;line-height:11px;color:#222;letter-spacing:-0.13px;right:239.830px;text-align:right;">14:00</div>
<div class="t" style="top:443px;font-size:11px;line-height:11px;color:#222;letter-spacing:-0.13px;right:239.830px;text-align:right;">Fondsges.</div>
<div class="t" style="top:415px;font-size:11px;line-height:11px;color:#222;letter-spacing:-0.13px;right:165.130px;text-align:right;">114,38</div>
<div class="t" style="top:429px;font-size:11px;line-height:11px;color:#222;letter-spacing:-0.13px;right:165.130px;text-align:right;">18.04.08</div>
<div class="t" style="top:415px;font-size:11px;line-height:11px;color:#222;letter-spacing:-0.13px;right:99.330px;text-align:right;">20.000,03</div>
<div class="t" style="top:415px;font-size:11px;line-height:11px;color:#222;letter-spacing:-0.13px;right:54.130px;text-align:right;">--</div>
<div class="t" style="top:429px;font-size:11px;line-height:11px;color:#222;letter-spacing:-0.13px;right:54.130px;text-align:right;">--</div>
<svg style="position:absolute;left:681px;top:416px" width="26" height="19" shape-rendering="crispEdges"><rect x="0" y="0" width="24" height="17" fill="#ffeeb0"/><rect x="1" y="1" width="22" height="1" fill="#fff6d0"/><rect x="1" y="1" width="1" height="15" fill="#fff6d0"/><rect x="0" y="0" width="24" height="1" fill="#cfcab8"/><rect x="0" y="0" width="1" height="17" fill="#cfcab8"/><rect x="23" y="0" width="1" height="17" fill="#222"/><rect x="0" y="16" width="24" height="1" fill="#222"/><rect x="24" y="2" width="1" height="16" fill="#d8d8d8"/><rect x="2" y="17" width="23" height="1" fill="#d8d8d8"/><path d="M3 5h1v1h-1zM6 5h1v1h-1zM3 6h1v1h-1zM5 6h1v1h-1zM3 7h1v1h-1zM4 7h1v1h-1zM3 8h1v1h-1zM5 8h1v1h-1zM3 9h1v1h-1zM6 9h1v1h-1zM9 5h1v1h-1zM10 5h1v1h-1zM8 6h1v1h-1zM11 6h1v1h-1zM8 7h1v1h-1zM9 7h1v1h-1zM10 7h1v1h-1zM11 7h1v1h-1zM8 8h1v1h-1zM11 8h1v1h-1zM8 9h1v1h-1zM11 9h1v1h-1zM13 5h1v1h-1zM16 5h1v1h-1zM13 6h1v1h-1zM16 6h1v1h-1zM13 7h1v1h-1zM16 7h1v1h-1zM13 8h1v1h-1zM16 8h1v1h-1zM14 9h1v1h-1zM15 9h1v1h-1zM18 5h1v1h-1zM19 5h1v1h-1zM20 5h1v1h-1zM18 6h1v1h-1zM18 7h1v1h-1zM19 7h1v1h-1zM18 8h1v1h-1zM18 9h1v1h-1z" fill="#000"/></svg>
<svg style="position:absolute;left:681px;top:439px" width="26" height="19" shape-rendering="crispEdges"><rect x="0" y="0" width="24" height="17" fill="#ffeeb0"/><rect x="1" y="1" width="22" height="1" fill="#fff6d0"/><rect x="1" y="1" width="1" height="15" fill="#fff6d0"/><rect x="0" y="0" width="24" height="1" fill="#cfcab8"/><rect x="0" y="0" width="1" height="17" fill="#cfcab8"/><rect x="23" y="0" width="1" height="17" fill="#222"/><rect x="0" y="16" width="24" height="1" fill="#222"/><rect x="24" y="2" width="1" height="16" fill="#d8d8d8"/><rect x="2" y="17" width="23" height="1" fill="#d8d8d8"/><path d="M2 2h1v1h-1zM6 2h1v1h-1zM2 3h1v1h-1zM6 3h1v1h-1zM2 4h1v1h-1zM6 4h1v1h-1zM3 5h1v1h-1zM5 5h1v1h-1zM4 6h1v1h-1zM9 2h1v1h-1zM10 2h1v1h-1zM11 2h1v1h-1zM9 3h1v1h-1zM9 4h1v1h-1zM10 4h1v1h-1zM9 5h1v1h-1zM9 6h1v1h-1zM10 6h1v1h-1zM11 6h1v1h-1zM14 2h1v1h-1zM15 2h1v1h-1zM16 2h1v1h-1zM14 3h1v1h-1zM17 3h1v1h-1zM14 4h1v1h-1zM15 4h1v1h-1zM16 4h1v1h-1zM14 5h1v1h-1zM16 5h1v1h-1zM14 6h1v1h-1zM17 6h1v1h-1zM19 4h1v1h-1zM20 4h1v1h-1zM2 9h1v1h-1zM5 9h1v1h-1zM2 10h1v1h-1zM4 10h1v1h-1zM2 11h1v1h-1zM3 11h1v1h-1zM2 12h1v1h-1zM4 12h1v1h-1zM2 13h1v1h-1zM5 13h1v1h-1zM8 9h1v1h-1zM9 9h1v1h-1zM7 10h1v1h-1zM10 10h1v1h-1zM7 11h1v1h-1zM8 11h1v1h-1zM9 11h1v1h-1zM10 11h1v1h-1zM7 12h1v1h-1zM10 12h1v1h-1zM7 13h1v1h-1zM10 13h1v1h-1zM12 9h1v1h-1zM15 9h1v1h-1zM12 10h1v1h-1zM15 10h1v1h-1zM12 11h1v1h-1zM15 11h1v1h-1zM12 12h1v1h-1zM15 12h1v1h-1zM13 13h1v1h-1zM14 13h1v1h-1zM17 9h1v1h-1zM18 9h1v1h-1zM19 9h1v1h-1zM17 10h1v1h-1zM17 11h1v1h-1zM18 11h1v1h-1zM17 12h1v1h-1zM17 13h1v1h-1z" fill="#000"/></svg>
<div style="position:absolute;left:24px;top:463px;width:686px;height:1px;background:#d0d0d0"></div>
<div style="position:absolute;left:31px;top:467px;width:13px;height:13px;box-sizing:border-box;border:1px solid #1f3a56;background:linear-gradient(135deg,#dcdcd4,#ffffff)"></div>
<div class="t" style="top:469px;font-size:11px;line-height:11px;color:#222;letter-spacing:-0.13px;right:638.630px;text-align:right;">1.484,2..</div>
<div class="t" style="top:469px;font-size:11px;line-height:11px;color:#222;transform:scaleX(0.9889);transform-origin:left center;left:95.797px;text-decoration:underline;">Sarasin M.L.-New</div>
<div class="t" style="top:483px;font-size:11px;line-height:11px;color:#222;transform:scaleX(0.9502);transform-origin:left center;left:95.778px;text-decoration:underline;">Energy Fd EO /</div>
<div class="t" style="top:497px;font-size:11px;line-height:11px;color:#222;transform:scaleX(0.9429);transform-origin:left center;left:95.776px;text-decoration:underline;">Namens-</div>
<div class="t" style="top:511px;font-size:11px;line-height:11px;color:#222;transform:scaleX(0.9828);transform-origin:left center;left:95.806px;text-decoration:underline;">Anteile (thes.) o.N.</div>
<svg style="position:absolute;left:218px;top:470px" width="26" height="19" shape-rendering="crispEdges"><rect x="0" y="0" width="24" height="17" fill="#ffeeb0"/><rect x="1" y="1" width="22" height="1" fill="#fff6d0"/><rect x="1" y="1" width="1" height="15" fill="#fff6d0"/><rect x="0" y="0" width="24" height="1" fill="#cfcab8"/><rect x="0" y="0" width="1" height="17" fill="#cfcab8"/><rect x="23" y="0" width="1" height="17" fill="#222"/><rect x="0" y="16" width="24" height="1" fill="#222"/><rect x="24" y="2" width="1" height="16" fill="#d8d8d8"/><rect x="2" y="17" width="23" height="1" fill="#d8d8d8"/><path d="M3 2h1v1h-1zM4 2h1v1h-1zM5 2h1v1h-1zM3 3h1v1h-1zM6 3h1v1h-1zM3 4h1v1h-1zM4 4h1v1h-1zM5 4h1v1h-1zM3 5h1v1h-1zM5 5h1v1h-1zM3 6h1v1h-1zM6 6h1v1h-1zM8 2h1v1h-1zM9 2h1v1h-1zM10 2h1v1h-1zM8 3h1v1h-1zM8 4h1v1h-1zM9 4h1v1h-1zM8 5h1v1h-1zM8 6h1v1h-1zM9 6h1v1h-1zM10 6h1v1h-1zM13 2h1v1h-1zM14 2h1v1h-1zM12 3h1v1h-1zM15 3h1v1h-1zM12 4h1v1h-1zM13 4h1v1h-1zM14 4h1v1h-1zM15 4h1v1h-1zM12 5h1v1h-1zM15 5h1v1h-1zM12 6h1v1h-1zM15 6h1v1h-1zM18 2h1v1h-1zM18 3h1v1h-1zM18 4h1v1h-1zM18 5h1v1h-1zM18 6h1v1h-1zM19 6h1v1h-1zM20 6h1v1h-1zM3 9h1v1h-1zM4 9h1v1h-1zM5 9h1v1h-1zM4 10h1v1h-1zM4 11h1v1h-1zM4 12h1v1h-1zM4 13h1v1h-1zM8 9h1v1h-1zM8 10h1v1h-1zM8 11h1v1h-1zM8 12h1v1h-1zM8 13h1v1h-1zM10 9h1v1h-1zM14 9h1v1h-1zM10 10h1v1h-1zM11 10h1v1h-1zM13 10h1v1h-1zM14 10h1v1h-1zM10 11h1v1h-1zM12 11h1v1h-1zM14 11h1v1h-1zM10 12h1v1h-1zM14 12h1v1h-1zM10 13h1v1h-1zM14 13h1v1h-1zM17 9h1v1h-1zM18 9h1v1h-1zM19 9h1v1h-1zM17 10h1v1h-1zM17 11h1v1h-1zM18 11h1v1h-1zM17 12h1v1h-1zM17 13h1v1h-1zM18 13h1v1h-1zM19 13h1v1h-1z" fill="#000"/></svg>
<svg style="position:absolute;left:218px;top:493px" width="26" height="19" shape-rendering="crispEdges"><rect x="0" y="0" width="24" height="17" fill="#fff"/><rect x="0" y="0" width="24" height="1" fill="#e4e4e4"/><rect x="0" y="0" width="1" height="17" fill="#e4e4e4"/><rect x="23" y="0" width="1" height="17" fill="#bdbdbd"/><rect x="0" y="16" width="24" height="1" fill="#bdbdbd"/><rect x="24" y="2" width="1" height="16" fill="#e8e8e8"/><rect x="2" y="17" width="23" height="1" fill="#e8e8e8"/><path d="M2 5h1v1h-1zM5 5h1v1h-1zM2 6h1v1h-1zM3 6h1v1h-1zM5 6h1v1h-1zM2 7h1v1h-1zM4 7h1v1h-1zM5 7h1v1h-1zM2 8h1v1h-1zM5 8h1v1h-1zM2 9h1v1h-1zM5 9h1v1h-1zM8 5h1v1h-1zM9 5h1v1h-1zM7 6h1v1h-1zM10 6h1v1h-1zM7 7h1v1h-1zM10 7h1v1h-1zM7 8h1v1h-1zM10 8h1v1h-1zM8 9h1v1h-1zM9 9h1v1h-1zM12 5h1v1h-1zM13 5h1v1h-1zM14 5h1v1h-1zM13 6h1v1h-1zM13 7h1v1h-1zM13 8h1v1h-1zM13 9h1v1h-1zM16 5h1v1h-1zM16 6h1v1h-1zM16 7h1v1h-1zM16 8h1v1h-1zM16 9h1v1h-1zM18 5h1v1h-1zM19 5h1v1h-1zM20 5h1v1h-1zM21 5h1v1h-1zM21 6h1v1h-1zM20 7h1v1h-1zM19 8h1v1h-1zM18 9h1v1h-1zM19 9h1v1h-1zM20 9h1v1h-1zM21 9h1v1h-1z" fill="#9a9a9a"/></svg>
<div class="t" style="top:469px;font-size:11px;line-height:11px;color:#222;letter-spacing:-0.13px;right:439.130px;text-align:right;">581365</div>
<div class="t" style="top:483px;font-size:11px;line-height:11px;color:#222;letter-spacing:-0.13px;right:439.130px;text-align:right;">Fonds</div>
<div class="t" style="top:497px;font-size:11px;line-height:11px;color:#222;transform:scaleX(0.8905);transform-origin:right center;right:439.000px;text-align:right;">EUR</div>
<div class="t" style="top:469px;font-size:11px;line-height:11px;color:#222;letter-spacing:-0.13px;right:387.530px;text-align:right;">9,85</div>
<div class="t" style="top:483px;font-size:11px;line-height:11px;color:#4a9a3a;letter-spacing:-0.13px;right:387.530px;text-align:right;">+0,22</div>
<svg style="position:absolute;left:346px;top:485px" width="7" height="7" shape-rendering="crispEdges"><path d="M1 0h1v1h-1zM2 0h1v1h-1zM3 0h1v1h-1zM4 0h1v1h-1zM5 0h1v1h-1zM6 0h1v1h-1zM2 1h1v1h-1zM3 1h1v1h-1zM4 1h1v1h-1zM5 1h1v1h-1zM6 1h1v1h-1zM3 2h1v1h-1zM4 2h1v1h-1zM5 2h1v1h-1zM6 2h1v1h-1zM2 3h1v1h-1zM3 3h1v1h-1zM4 3h1v1h-1zM5 3h1v1h-1zM6 3h1v1h-1zM1 4h1v1h-1zM2 4h1v1h-1zM3 4h1v1h-1zM5 4h1v1h-1zM6 4h1v1h-1zM0 5h1v1h-1zM1 5h1v1h-1zM2 5h1v1h-1zM6 5h1v1h-1zM0 6h1v1h-1zM1 6h1v1h-1z" fill="#4e9e3c"/></svg>
<div class="t" style="top:497px;font-size:11px;line-height:11px;color:#4a9a3a;letter-spacing:-0.13px;right:374.430px;text-align:right;">+2,28 %</div>
<div class="t" style="top:469px;font-size:11px;line-height:11px;color:#222;letter-spacing:-0.13px;right:308.730px;text-align:right;">14.619,67</div>
<div class="t" style="top:483px;font-size:11px;line-height:11px;color:#a8081e;letter-spacing:-0.13px;right:308.730px;text-align:right;">-1.380,33</div>
<svg style="position:absolute;left:424px;top:484px" width="8" height="8" shape-rendering="crispEdges"><path d="M3 0h1v1h-1zM4 0h1v1h-1zM3 1h1v1h-1zM4 1h1v1h-1zM3 2h1v1h-1zM4 2h1v1h-1zM3 3h1v1h-1zM4 3h1v1h-1zM0 4h1v1h-1zM1 4h1v1h-1zM2 4h1v1h-1zM3 4h1v1h-1zM4 4h1v1h-1zM5 4h1v1h-1zM6 4h1v1h-1zM7 4h1v1h-1zM1 5h1v1h-1zM2 5h1v1h-1zM3 5h1v1h-1zM4 5h1v1h-1zM5 5h1v1h-1zM6 5h1v1h-1zM2 6h1v1h-1zM3 6h1v1h-1zM4 6h1v1h-1zM5 6h1v1h-1zM3 7h1v1h-1zM4 7h1v1h-1z" fill="#c80000"/></svg>
<div class="t" style="top:497px;font-size:11px;line-height:11px;color:#a8081e;letter-spacing:-0.13px;right:295.730px;text-align:right;">-8,63 %</div>
<div class="t" style="top:469px;font-size:11px;line-height:11px;color:#222;letter-spacing:-0.13px;right:239.830px;text-align:right;">30.07.08</div>
<div class="t" style="top:483px;font-size:11px;line-height:11px;color:#222;letter-spacing:-0.13px;right:239.830px;text-align:right;">14:00</div>
<div class="t" style="top:497px;font-size:11px;line-height:11px;color:#222;letter-spacing:-0.13px;right:239.830px;text-align:right;">Fondsges.</div>
<div class="t" style="top:469px;font-size:11px;line-height:11px;color:#222;letter-spacing:-0.13px;right:165.130px;text-align:right;">10,78</div>
<div class="t" style="top:483px;font-size:11px;line-height:11px;color:#222;letter-spacing:-0.13px;right:165.130px;text-align:right;">18.04.08</div>
<div class="t" style="top:469px;font-size:11px;line-height:11px;color:#222;letter-spacing:-0.13px;right:99.330px;text-align:right;">16.000,00</div>
<div class="t" style="top:469px;font-size:11px;line-height:11px;color:#222;letter-spacing:-0.13px;right:54.130px;text-align:right;">--</div>
<div class="t" style="top:483px;font-size:11px;line-height:11px;color:#222;letter-spacing:-0.13px;right:54.130px;text-align:right;">--</div>
<svg style="position:absolute;left:681px;top:470px" width="26" height="19" shape-rendering="crispEdges"><rect x="0" y="0" width="24" height="17" fill="#ffeeb0"/><rect x="1" y="1" width="22" height="1" fill="#fff6d0"/><rect x="1" y="1" width="1" height="15" fill="#fff6d0"/><rect x="0" y="0" width="24" height="1" fill="#cfcab8"/><rect x="0" y="0" width="1" height="17" fill="#cfcab8"/><rect x="23" y="0" width="1" height="17" fill="#222"/><rect x="0" y="16" width="24" height="1" fill="#222"/><rect x="24" y="2" width="1" height="16" fill="#d8d8d8"/><rect x="2" y="17" width="23" height="1" fill="#d8d8d8"/><path d="M3 5h1v1h-1zM6 5h1v1h-1zM3 6h1v1h-1zM5 6h1v1h-1zM3 7h1v1h-1zM4 7h1v1h-1zM3 8h1v1h-1zM5 8h1v1h-1zM3 9h1v1h-1zM6 9h1v1h-1zM9 5h1v1h-1zM10 5h1v1h-1zM8 6h1v1h-1zM11 6h1v1h-1zM8 7h1v1h-1zM9 7h1v1h-1zM10 7h1v1h-1zM11 7h1v1h-1zM8 8h1v1h-1zM11 8h1v1h-1zM8 9h1v1h-1zM11 9h1v1h-1zM13 5h1v1h-1zM16 5h1v1h-1zM13 6h1v1h-1zM16 6h1v1h-1zM13 7h1v1h-1zM16 7h1v1h-1zM13 8h1v1h-1zM16 8h1v1h-1zM14 9h1v1h-1zM15 9h1v1h-1zM18 5h1v1h-1zM19 5h1v1h-1zM20 5h1v1h-1zM18 6h1v1h-1zM18 7h1v1h-1zM19 7h1v1h-1zM18 8h1v1h-1zM18 9h1v1h-1z" fill="#000"/></svg>
<svg style="position:absolute;left:681px;top:493px" width="26" height="19" shape-rendering="crispEdges"><rect x="0" y="0" width="24" height="17" fill="#ffeeb0"/><rect x="1" y="1" width="22" height="1" fill="#fff6d0"/><rect x="1" y="1" width="1" height="15" fill="#fff6d0"/><rect x="0" y="0" width="24" height="1" fill="#cfcab8"/><rect x="0" y="0" width="1" height="17" fill="#cfcab8"/><rect x="23" y="0" width="1" height="17" fill="#222"/><rect x="0" y="16" width="24" height="1" fill="#222"/><rect x="24" y="2" width="1" height="16" fill="#d8d8d8"/><rect x="2" y="17" width="23" height="1" fill="#d8d8d8"/><path d="M2 2h1v1h-1zM6 2h1v1h-1zM2 3h1v1h-1zM6 3h1v1h-1zM2 4h1v1h-1zM6 4h1v1h-1zM3 5h1v1h-1zM5 5h1v1h-1zM4 6h1v1h-1zM9 2h1v1h-1zM10 2h1v1h-1zM11 2h1v1h-1zM9 3h1v1h-1zM9 4h1v1h-1zM10 4h1v1h-1zM9 5h1v1h-1zM9 6h1v1h-1zM10 6h1v1h-1zM11 6h1v1h-1zM14 2h1v1h-1zM15 2h1v1h-1zM16 2h1v1h-1zM14 3h1v1h-1zM17 3h1v1h-1zM14 4h1v1h-1zM15 4h1v1h-1zM16 4h1v1h-1zM14 5h1v1h-1zM16 5h1v1h-1zM14 6h1v1h-1zM17 6h1v1h-1zM19 4h1v1h-1zM20 4h1v1h-1zM2 9h1v1h-1zM5 9h1v1h-1zM2 10h1v1h-1zM4 10h1v1h-1zM2 11h1v1h-1zM3 11h1v1h-1zM2 12h1v1h-1zM4 12h1v1h-1zM2 13h1v1h-1zM5 13h1v1h-1zM8 9h1v1h-1zM9 9h1v1h-1zM7 10h1v1h-1zM10 10h1v1h-1zM7 11h1v1h-1zM8 11h1v1h-1zM9 11h1v1h-1zM10 11h1v1h-1zM7 12h1v1h-1zM10 12h1v1h-1zM7 13h1v1h-1zM10 13h1v1h-1zM12 9h1v1h-1zM15 9h1v1h-1zM12 10h1v1h-1zM15 10h1v1h-1zM12 11h1v1h-1zM15 11h1v1h-1zM12 12h1v1h-1zM15 12h1v1h-1zM13 13h1v1h-1zM14 13h1v1h-1zM17 9h1v1h-1zM18 9h1v1h-1zM19 9h1v1h-1zM17 10h1v1h-1zM17 11h1v1h-1zM18 11h1v1h-1zM17 12h1v1h-1zM17 13h1v1h-1z" fill="#000"/></svg>
<div style="position:absolute;left:24px;top:527px;width:686px;height:1px;background:#d0d0d0"></div>
<div style="position:absolute;left:31px;top:531px;width:13px;height:13px;box-sizing:border-box;border:1px solid #1f3a56;background:linear-gradient(135deg,#dcdcd4,#ffffff)"></div>
<div class="t" style="top:533px;font-size:11px;line-height:11px;color:#222;letter-spacing:-0.13px;right:638.630px;text-align:right;">100,351</div>
<div class="t" style="top:533px;font-size:11px;line-height:11px;color:#222;transform:scaleX(0.9865);transform-origin:left center;left:95.783px;text-decoration:underline;">ZZ2 Mit.fds</div>
<div class="t" style="top:547px;font-size:11px;line-height:11px;color:#222;transform:scaleX(1.0003);transform-origin:left center;left:95.793px;text-decoration:underline;">i.fest.u.var.ve.WP /</div>
<div class="t" style="top:561px;font-size:11px;line-height:11px;color:#222;transform:scaleX(0.9544);transform-origin:left center;left:95.792px;text-decoration:underline;">Inh.-Ant. o.N.</div>
<svg style="position:absolute;left:218px;top:534px" width="26" height="19" shape-rendering="crispEdges"><rect x="0" y="0" width="24" height="17" fill="#ffeeb0"/><rect x="1" y="1" width="22" height="1" fill="#fff6d0"/><rect x="1" y="1" width="1" height="15" fill="#fff6d0"/><rect x="0" y="0" width="24" height="1" fill="#cfcab8"/><rect x="0" y="0" width="1" height="17" fill="#cfcab8"/><rect x="23" y="0" width="1" height="17" fill="#222"/><rect x="0" y="16" width="24" height="1" fill="#222"/><rect x="24" y="2" width="1" height="16" fill="#d8d8d8"/><rect x="2" y="17" width="23" height="1" fill="#d8d8d8"/><path d="M3 2h1v1h-1zM4 2h1v1h-1zM5 2h1v1h-1zM3 3h1v1h-1zM6 3h1v1h-1zM3 4h1v1h-1zM4 4h1v1h-1zM5 4h1v1h-1zM3 5h1v1h-1zM5 5h1v1h-1zM3 6h1v1h-1zM6 6h1v1h-1zM8 2h1v1h-1zM9 2h1v1h-1zM10 2h1v1h-1zM8 3h1v1h-1zM8 4h1v1h-1zM9 4h1v1h-1zM8 5h1v1h-1zM8 6h1v1h-1zM9 6h1v1h-1zM10 6h1v1h-1zM13 2h1v1h-1zM14 2h1v1h-1zM12 3h1v1h-1zM15 3h1v1h-1zM12 4h1v1h-1zM13 4h1v1h-1zM14 4h1v1h-1zM15 4h1v1h-1zM12 5h1v1h-1zM15 5h1v1h-1zM12 6h1v1h-1zM15 6h1v1h-1zM18 2h1v1h-1zM18 3h1v1h-1zM18 4h1v1h-1zM18 5h1v1h-1zM18 6h1v1h-1zM19 6h1v1h-1zM20 6h1v1h-1zM3 9h1v1h-1zM4 9h1v1h-1zM5 9h1v1h-1zM4 10h1v1h-1zM4 11h1v1h-1zM4 12h1v1h-1zM4 13h1v1h-1zM8 9h1v1h-1zM8 10h1v1h-1zM8 11h1v1h-1zM8 12h1v1h-1zM8 13h1v1h-1zM10 9h1v1h-1zM14 9h1v1h-1zM10 10h1v1h-1zM11 10h1v1h-1zM13 10h1v1h-1zM14 10h1v1h-1zM10 11h1v1h-1zM12 11h1v1h-1zM14 11h1v1h-1zM10 12h1v1h-1zM14 12h1v1h-1zM10 13h1v1h-1zM14 13h1v1h-1zM17 9h1v1h-1zM18 9h1v1h-1zM19 9h1v1h-1zM17 10h1v1h-1zM17 11h1v1h-1zM18 11h1v1h-1zM17 12h1v1h-1zM17 13h1v1h-1zM18 13h1v1h-1zM19 13h1v1h-1z" fill="#000"/></svg>
<svg style="position:absolute;left:218px;top:557px" width="26" height="19" shape-rendering="crispEdges"><rect x="0" y="0" width="24" height="17" fill="#fff"/><rect x="0" y="0" width="24" height="1" fill="#e4e4e4"/><rect x="0" y="0" width="1" height="17" fill="#e4e4e4"/><rect x="23" y="0" width="1" height="17" fill="#bdbdbd"/><rect x="0" y="16" width="24" height="1" fill="#bdbdbd"/><rect x="24" y="2" width="1" height="16" fill="#e8e8e8"/><rect x="2" y="17" width="23" height="1" fill="#e8e8e8"/><path d="M2 5h1v1h-1zM5 5h1v1h-1zM2 6h1v1h-1zM3 6h1v1h-1zM5 6h1v1h-1zM2 7h1v1h-1zM4 7h1v1h-1zM5 7h1v1h-1zM2 8h1v1h-1zM5 8h1v1h-1zM2 9h1v1h-1zM5 9h1v1h-1zM8 5h1v1h-1zM9 5h1v1h-1zM7 6h1v1h-1zM10 6h1v1h-1zM7 7h1v1h-1zM10 7h1v1h-1zM7 8h1v1h-1zM10 8h1v1h-1zM8 9h1v1h-1zM9 9h1v1h-1zM12 5h1v1h-1zM13 5h1v1h-1zM14 5h1v1h-1zM13 6h1v1h-1zM13 7h1v1h-1zM13 8h1v1h-1zM13 9h1v1h-1zM16 5h1v1h-1zM16 6h1v1h-1zM16 7h1v1h-1zM16 8h1v1h-1zM16 9h1v1h-1zM18 5h1v1h-1zM19 5h1v1h-1zM20 5h1v1h-1zM21 5h1v1h-1zM21 6h1v1h-1zM20 7h1v1h-1zM19 8h1v1h-1zM18 9h1v1h-1zM19 9h1v1h-1zM20 9h1v1h-1zM21 9h1v1h-1z" fill="#9a9a9a"/></svg>
<div class="t" style="top:533px;font-size:11px;line-height:11px;color:#222;letter-spacing:-0.13px;right:439.130px;text-align:right;">987239</div>
<div class="t" style="top:547px;font-size:11px;line-height:11px;color:#222;letter-spacing:-0.13px;right:439.130px;text-align:right;">Fonds</div>
<div class="t" style="top:561px;font-size:11px;line-height:11px;color:#222;transform:scaleX(0.8905);transform-origin:right center;right:439.000px;text-align:right;">EUR</div>
<div class="t" style="top:533px;font-size:11px;line-height:11px;color:#222;letter-spacing:-0.13px;right:387.530px;text-align:right;">227,50</div>
<div class="t" style="top:547px;font-size:11px;line-height:11px;color:#4a9a3a;letter-spacing:-0.13px;right:387.530px;text-align:right;">+13,20</div>
<svg style="position:absolute;left:345px;top:548px" width="8" height="8" shape-rendering="crispEdges"><path d="M3 0h1v1h-1zM4 0h1v1h-1zM2 1h1v1h-1zM3 1h1v1h-1zM4 1h1v1h-1zM5 1h1v1h-1zM1 2h1v1h-1zM2 2h1v1h-1zM3 2h1v1h-1zM4 2h1v1h-1zM5 2h1v1h-1zM6 2h1v1h-1zM0 3h1v1h-1zM1 3h1v1h-1zM2 3h1v1h-1zM3 3h1v1h-1zM4 3h1v1h-1zM5 3h1v1h-1zM6 3h1v1h-1zM7 3h1v1h-1zM3 4h1v1h-1zM4 4h1v1h-1zM3 5h1v1h-1zM4 5h1v1h-1zM3 6h1v1h-1zM4 6h1v1h-1zM3 7h1v1h-1zM4 7h1v1h-1z" fill="#4e9e3c"/></svg>
<div class="t" style="top:561px;font-size:11px;line-height:11px;color:#4a9a3a;letter-spacing:-0.13px;right:374.430px;text-align:right;">+6,16 %</div>
<div class="t" style="top:533px;font-size:11px;line-height:11px;color:#222;letter-spacing:-0.13px;right:308.730px;text-align:right;">22.829,85</div>
<div class="t" style="top:547px;font-size:11px;line-height:11px;color:#4a9a3a;letter-spacing:-0.13px;right:308.730px;text-align:right;">+2.829,90</div>
<svg style="position:absolute;left:424px;top:548px" width="8" height="8" shape-rendering="crispEdges"><path d="M3 0h1v1h-1zM4 0h1v1h-1zM2 1h1v1h-1zM3 1h1v1h-1zM4 1h1v1h-1zM5 1h1v1h-1zM1 2h1v1h-1zM2 2h1v1h-1zM3 2h1v1h-1zM4 2h1v1h-1zM5 2h1v1h-1zM6 2h1v1h-1zM0 3h1v1h-1zM1 3h1v1h-1zM2 3h1v1h-1zM3 3h1v1h-1zM4 3h1v1h-1zM5 3h1v1h-1zM6 3h1v1h-1zM7 3h1v1h-1zM3 4h1v1h-1zM4 4h1v1h-1zM3 5h1v1h-1zM4 5h1v1h-1zM3 6h1v1h-1zM4 6h1v1h-1zM3 7h1v1h-1zM4 7h1v1h-1z" fill="#4e9e3c"/></svg>
<div class="t" style="top:561px;font-size:11px;line-height:11px;color:#4a9a3a;letter-spacing:-0.13px;right:295.730px;text-align:right;">+14,15 %</div>
<div class="t" style="top:533px;font-size:11px;line-height:11px;color:#222;letter-spacing:-0.13px;right:239.830px;text-align:right;">01.08.08</div>
<div class="t" style="top:547px;font-size:11px;line-height:11px;color:#222;letter-spacing:-0.13px;right:239.830px;text-align:right;">14:00</div>
<div class="t" style="top:561px;font-size:11px;line-height:11px;color:#222;letter-spacing:-0.13px;right:239.830px;text-align:right;">Fondsges.</div>
<div class="t" style="top:533px;font-size:11px;line-height:11px;color:#222;letter-spacing:-0.13px;right:165.130px;text-align:right;">199,30</div>
<div class="t" style="top:547px;font-size:11px;line-height:11px;color:#222;letter-spacing:-0.13px;right:165.130px;text-align:right;">18.04.08</div>
<div class="t" style="top:533px;font-size:11px;line-height:11px;color:#222;letter-spacing:-0.13px;right:99.330px;text-align:right;">19.999,95</div>
<div class="t" style="top:533px;font-size:11px;line-height:11px;color:#222;letter-spacing:-0.13px;right:54.130px;text-align:right;">--</div>
<div class="t" style="top:547px;font-size:11px;line-height:11px;color:#222;letter-spacing:-0.13px;right:54.130px;text-align:right;">--</div>
<svg style="position:absolute;left:681px;top:534px" width="26" height="19" shape-rendering="crispEdges"><rect x="0" y="0" width="24" height="17" fill="#ffeeb0"/><rect x="1" y="1" width="22" height="1" fill="#fff6d0"/><rect x="1" y="1" width="1" height="15" fill="#fff6d0"/><rect x="0" y="0" width="24" height="1" fill="#cfcab8"/><rect x="0" y="0" width="1" height="17" fill="#cfcab8"/><rect x="23" y="0" width="1" height="17" fill="#222"/><rect x="0" y="16" width="24" height="1" fill="#222"/><rect x="24" y="2" width="1" height="16" fill="#d8d8d8"/><rect x="2" y="17" width="23" height="1" fill="#d8d8d8"/><path d="M3 5h1v1h-1zM6 5h1v1h-1zM3 6h1v1h-1zM5 6h1v1h-1zM3 7h1v1h-1zM4 7h1v1h-1zM3 8h1v1h-1zM5 8h1v1h-1zM3 9h1v1h-1zM6 9h1v1h-1zM9 5h1v1h-1zM10 5h1v1h-1zM8 6h1v1h-1zM11 6h1v1h-1zM8 7h1v1h-1zM9 7h1v1h-1zM10 7h1v1h-1zM11 7h1v1h-1zM8 8h1v1h-1zM11 8h1v1h-1zM8 9h1v1h-1zM11 9h1v1h-1zM13 5h1v1h-1zM16 5h1v1h-1zM13 6h1v1h-1zM16 6h1v1h-1zM13 7h1v1h-1zM16 7h1v1h-1zM13 8h1v1h-1zM16 8h1v1h-1zM14 9h1v1h-1zM15 9h1v1h-1zM18 5h1v1h-1zM19 5h1v1h-1zM20 5h1v1h-1zM18 6h1v1h-1zM18 7h1v1h-1zM19 7h1v1h-1zM18 8h1v1h-1zM18 9h1v1h-1z" fill="#000"/></svg>
<svg style="position:absolute;left:681px;top:557px" width="26" height="19" shape-rendering="crispEdges"><rect x="0" y="0" width="24" height="17" fill="#ffeeb0"/><rect x="1" y="1" width="22" height="1" fill="#fff6d0"/><rect x="1" y="1" width="1" height="15" fill="#fff6d0"/><rect x="0" y="0" width="24" height="1" fill="#cfcab8"/><rect x="0" y="0" width="1" height="17" fill="#cfcab8"/><rect x="23" y="0" width="1" height="17" fill="#222"/><rect x="0" y="16" width="24" height="1" fill="#222"/><rect x="24" y="2" width="1" height="16" fill="#d8d8d8"/><rect x="2" y="17" width="23" height="1" fill="#d8d8d8"/><path d="M2 2h1v1h-1zM6 2h1v1h-1zM2 3h1v1h-1zM6 3h1v1h-1zM2 4h1v1h-1zM6 4h1v1h-1zM3 5h1v1h-1zM5 5h1v1h-1zM4 6h1v1h-1zM9 2h1v1h-1zM10 2h1v1h-1zM11 2h1v1h-1zM9 3h1v1h-1zM9 4h1v1h-1zM10 4h1v1h-1zM9 5h1v1h-1zM9 6h1v1h-1zM10 6h1v1h-1zM11 6h1v1h-1zM14 2h1v1h-1zM15 2h1v1h-1zM16 2h1v1h-1zM14 3h1v1h-1zM17 3h1v1h-1zM14 4h1v1h-1zM15 4h1v1h-1zM16 4h1v1h-1zM14 5h1v1h-1zM16 5h1v1h-1zM14 6h1v1h-1zM17 6h1v1h-1zM19 4h1v1h-1zM20 4h1v1h-1zM2 9h1v1h-1zM5 9h1v1h-1zM2 10h1v1h-1zM4 10h1v1h-1zM2 11h1v1h-1zM3 11h1v1h-1zM2 12h1v1h-1zM4 12h1v1h-1zM2 13h1v1h-1zM5 13h1v1h-1zM8 9h1v1h-1zM9 9h1v1h-1zM7 10h1v1h-1zM10 10h1v1h-1zM7 11h1v1h-1zM8 11h1v1h-1zM9 11h1v1h-1zM10 11h1v1h-1zM7 12h1v1h-1zM10 12h1v1h-1zM7 13h1v1h-1zM10 13h1v1h-1zM12 9h1v1h-1zM15 9h1v1h-1zM12 10h1v1h-1zM15 10h1v1h-1zM12 11h1v1h-1zM15 11h1v1h-1zM12 12h1v1h-1zM15 12h1v1h-1zM13 13h1v1h-1zM14 13h1v1h-1zM17 9h1v1h-1zM18 9h1v1h-1zM19 9h1v1h-1zM17 10h1v1h-1zM17 11h1v1h-1zM18 11h1v1h-1zM17 12h1v1h-1zM17 13h1v1h-1z" fill="#000"/></svg>
<div style="position:absolute;left:24px;top:581px;width:686px;height:1px;background:#777"></div>
<svg style="position:absolute;left:199px;top:82px" width="7" height="7" shape-rendering="crispEdges"><path d="M0 0h1v1h-1zM1 0h1v1h-1zM0 1h1v1h-1zM1 1h1v1h-1zM2 1h1v1h-1zM6 1h1v1h-1zM1 2h1v1h-1zM2 2h1v1h-1zM3 2h1v1h-1zM5 2h1v1h-1zM6 2h1v1h-1zM2 3h1v1h-1zM3 3h1v1h-1zM4 3h1v1h-1zM5 3h1v1h-1zM6 3h1v1h-1zM3 4h1v1h-1zM4 4h1v1h-1zM5 4h1v1h-1zM6 4h1v1h-1zM2 5h1v1h-1zM3 5h1v1h-1zM4 5h1v1h-1zM5 5h1v1h-1zM6 5h1v1h-1zM1 6h1v1h-1zM2 6h1v1h-1zM3 6h1v1h-1zM4 6h1v1h-1zM5 6h1v1h-1zM6 6h1v1h-1z" fill="#c80000"/></svg>
<div class="t b" style="top:587px;font-size:10px;line-height:10px;font-weight:bold;color:#111;letter-spacing:0.5px;transform:scaleX(1.0013);transform-origin:left center;left:265.452px;">Depotwert:</div>
<div class="t b" style="top:601px;font-size:10px;line-height:10px;font-weight:bold;color:#111;letter-spacing:0.5px;transform:scaleX(0.9546);transform-origin:left center;left:265.506px;">Veränderung:</div>
<div class="t" style="top:586px;font-size:11px;line-height:11px;color:#222;transform:scaleX(0.8237);transform-origin:left center;left:335.589px;">EUR</div>
<div class="t" style="top:600px;font-size:11px;line-height:11px;color:#222;transform:scaleX(0.8237);transform-origin:left center;left:335.589px;">EUR</div>
<div class="t" style="top:586px;font-size:11px;line-height:11px;color:#222;letter-spacing:-0.13px;right:309.030px;text-align:right;">98.063,41</div>
<div class="t" style="top:600px;font-size:11px;line-height:11px;color:#a8081e;letter-spacing:-0.13px;right:309.030px;text-align:right;">-1.936,59</div>
<svg style="position:absolute;left:425px;top:602px" width="7" height="7" shape-rendering="crispEdges"><path d="M0 0h1v1h-1zM1 0h1v1h-1zM0 1h1v1h-1zM1 1h1v1h-1zM2 1h1v1h-1zM6 1h1v1h-1zM1 2h1v1h-1zM2 2h1v1h-1zM3 2h1v1h-1zM5 2h1v1h-1zM6 2h1v1h-1zM2 3h1v1h-1zM3 3h1v1h-1zM4 3h1v1h-1zM5 3h1v1h-1zM6 3h1v1h-1zM3 4h1v1h-1zM4 4h1v1h-1zM5 4h1v1h-1zM6 4h1v1h-1zM2 5h1v1h-1zM3 5h1v1h-1zM4 5h1v1h-1zM5 5h1v1h-1zM6 5h1v1h-1zM1 6h1v1h-1zM2 6h1v1h-1zM3 6h1v1h-1zM4 6h1v1h-1zM5 6h1v1h-1zM6 6h1v1h-1z" fill="#c80000"/></svg>
<div class="t" style="top:614px;font-size:11px;line-height:11px;color:#a8081e;letter-spacing:-0.13px;right:295.830px;text-align:right;">-1,94 %</div>
<div class="t b" style="top:587px;font-size:10px;line-height:10px;font-weight:bold;color:#111;letter-spacing:0.5px;transform:scaleX(1.0123);transform-origin:left center;left:490.128px;">Kaufwert:</div>
<div class="t" style="top:586px;font-size:11px;line-height:11px;color:#222;transform:scaleX(0.8237);transform-origin:left center;left:544.589px;">EUR</div>
<div class="t" style="top:586px;font-size:11px;line-height:11px;color:#222;letter-spacing:-0.13px;right:99.230px;text-align:right;">99.999,99</div>
<div style="position:absolute;left:24px;top:640px;width:686px;height:1px;background:#777"></div>
<svg style="position:absolute;left:23px;top:650px" width="16" height="18" viewBox="0 0 16 18"><path d="M1.5 1 V13.5 H10" stroke="#000" stroke-width="1.3" fill="none"/><path d="M10 10 L14 13.5 L10 17 Z" fill="#000"/></svg>
<div style="position:absolute;left:45px;top:651px;width:190px;height:18px;box-sizing:border-box;border:1px solid #9c9c9c;background:#fff;"><div style="position:absolute;left:0;top:0;width:100%;height:13px;overflow:hidden"><div style="position:absolute;left:7px;top:3px;font-size:11px;line-height:14px;color:#111;white-space:nowrap;letter-spacing:0px">hinzufügen / löschen / bearbeiten</div></div></div>
<div style="position:absolute;left:218px;top:655px;width:12px;height:9px;background:linear-gradient(180deg,#d4e0fa,#bccff5);border-radius:2px"><svg width="12" height="9" viewBox="0 0 12 9" style="position:absolute;left:0;top:0"><path d="M1.8 2 L6 6.2 L10.2 2" stroke="#34476e" stroke-width="2" fill="none"/></svg></div>
<div style="position:absolute;left:247px;top:651px;width:190px;height:18px;box-sizing:border-box;border:1px solid #9c9c9c;background:#fff;"><div style="position:absolute;left:0;top:0;width:100%;height:13px;overflow:hidden"><div style="position:absolute;left:7.800000000000011px;top:3px;font-size:11px;line-height:14px;color:#111;white-space:nowrap;letter-spacing:0px">weitere Aktionen</div></div></div>
<div style="position:absolute;left:420px;top:655px;width:12px;height:9px;background:linear-gradient(180deg,#d4e0fa,#bccff5);border-radius:2px"><svg width="12" height="9" viewBox="0 0 12 9" style="position:absolute;left:0;top:0"><path d="M1.8 2 L6 6.2 L10.2 2" stroke="#34476e" stroke-width="2" fill="none"/></svg></div>
<div class="t b" style="top:652px;font-size:12px;line-height:12px;font-weight:bold;color:#111;letter-spacing:0.5px;transform:scaleX(1.0544);transform-origin:left center;left:600.168px;">Aktualisieren</div>
<div style="position:absolute;left:694px;top:651px;width:14px;height:15px;box-sizing:border-box;border:1px solid #888;border-right-color:#444;border-bottom-color:#444;background:linear-gradient(180deg,#fafafa,#d8d8e0)"><div style="position:absolute;left:4px;top:3px;width:0;height:0;border-top:4px solid transparent;border-bottom:4px solid transparent;border-left:5px solid #000"></div></div>
</body></html>
